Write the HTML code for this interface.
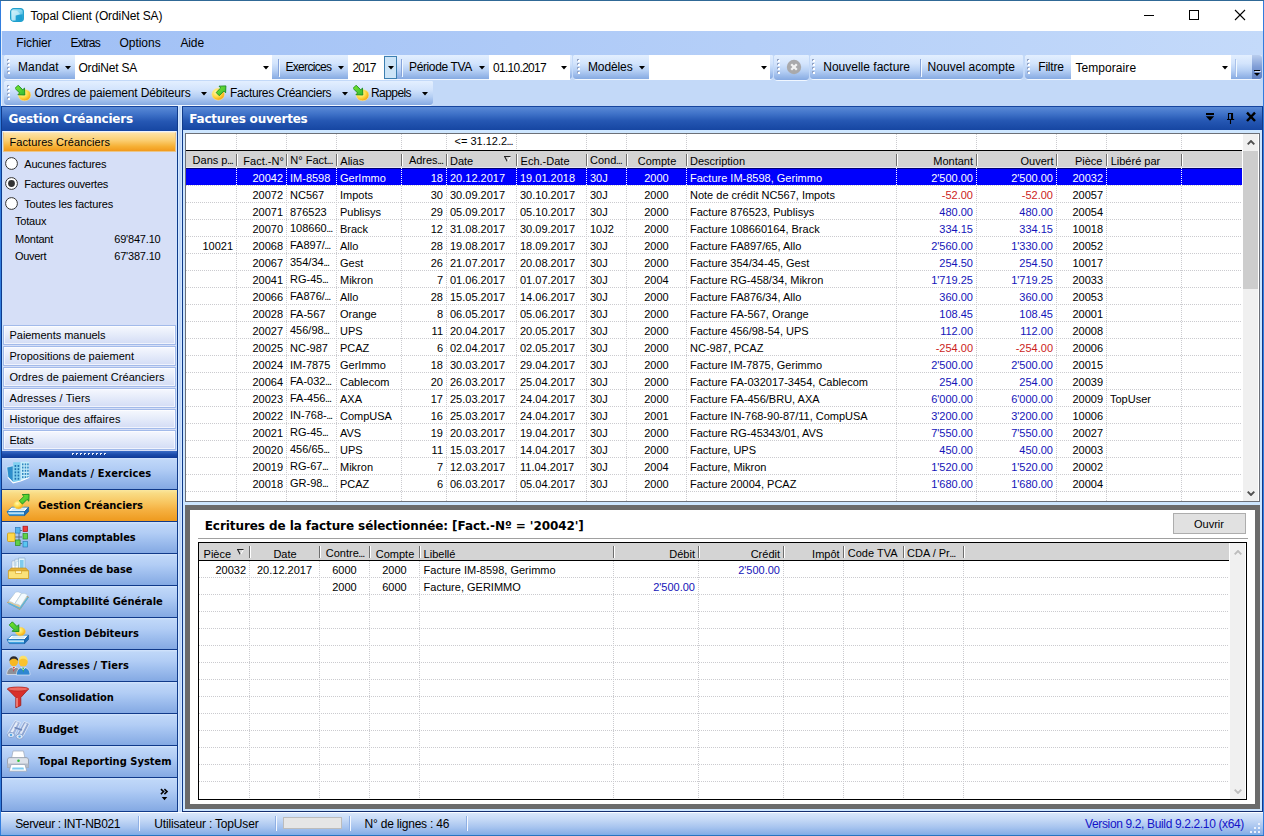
<!DOCTYPE html>
<html lang="fr"><head><meta charset="utf-8"><title>Topal Client (OrdiNet SA)</title>
<style>
html,body{margin:0;padding:0;}
body{width:1264px;height:836px;overflow:hidden;background:#327dde;font-family:"Liberation Sans",sans-serif;font-size:12px;}
#win{position:relative;width:1264px;height:836px;overflow:hidden;}
#win div,#win span,#win svg{position:absolute;box-sizing:border-box;}
.t{white-space:nowrap;}
.hd{font-family:"DejaVu Sans","Liberation Sans",sans-serif;}
.nv{font-family:"DejaVu Sans Condensed","DejaVu Sans","Liberation Sans",sans-serif;}
.e{font-style:normal;letter-spacing:-1.1px;margin-left:-0.5px;}

</style></head>
<body>
<div id="win">
<div style="left:0px;top:0px;width:1264px;height:1px;background:#306996;"></div>
<div style="left:0px;top:835px;width:1264px;height:1px;background:#2873be;"></div>
<div style="left:1px;top:1px;width:1262px;height:30px;background:#fff;"></div>
<svg style="left:10px;top:8px" width="14" height="14" viewBox="0 0 14 14"><defs><linearGradient id="ai" x1="0" y1="0" x2="1" y2="1"><stop offset="0" stop-color="#c9f0fa"/><stop offset="0.5" stop-color="#7fd3ee"/><stop offset="1" stop-color="#1d9fd2"/></linearGradient></defs><rect x="0.6" y="0.6" width="12.8" height="12.8" rx="3.2" fill="url(#ai)" stroke="#1f9fcc" stroke-width="1.1"/><path d="M5.6 7.4L12.6 6.2V10.4a2.4 2.4 0 0 1-2.4 2.4H5.6z" fill="#149bcf" opacity=".85"/><path d="M1.8 2.8h5.2l3.2 3.2-4.6 1.4v4.8H1.8z" fill="#e4f8fd" opacity=".55"/></svg>
<span class="t" style="top:7.5px;line-height:16px;font-size:12px;color:#000;letter-spacing:-0.109px;left:30.4px;">Topal Client (OrdiNet SA)</span>
<svg style="left:1130px;top:1px" width="133" height="30" viewBox="0 0 133 30" shape-rendering="crispEdges"><rect x="14" y="14" width="10" height="1" fill="#000"/><rect x="59.5" y="9.5" width="9" height="9" fill="none" stroke="#000" stroke-width="1"/><g shape-rendering="geometricPrecision" stroke="#000" stroke-width="1.1"><line x1="105" y1="9" x2="115" y2="19"/><line x1="115" y1="9" x2="105" y2="19"/></g></svg>
<div style="left:1px;top:31px;width:1262px;height:75px;background:#c3d9f8;"></div>
<div style="left:1px;top:31px;width:1262px;height:24px;background:linear-gradient(90deg,#9fbff5 0%,#c4dafa 100%);"></div>
<span class="t" style="top:34.5px;line-height:16px;font-size:12px;color:#000;letter-spacing:-0.129px;left:16.3px;">Fichier</span>
<span class="t" style="top:34.5px;line-height:16px;font-size:12px;color:#000;letter-spacing:-0.735px;left:70.4px;">Extras</span>
<span class="t" style="top:34.5px;line-height:16px;font-size:12px;color:#000;letter-spacing:-0.036px;left:119.5px;">Options</span>
<span class="t" style="top:34.5px;line-height:16px;font-size:12px;color:#000;letter-spacing:-0.104px;left:180.4px;">Aide</span>
<div style="left:1px;top:31px;width:1px;height:75px;background:#e4eefc;"></div>
<div style="left:4px;top:55px;width:568px;height:25px;background:#f1f7ff;border-radius:3px 2px 4px 4px;"></div>
<div style="left:4px;top:55px;width:568px;height:24px;background:linear-gradient(180deg,#e3efff 0%,#d3e4fc 35%,#b5cff4 65%,#86aae2 100%);border-radius:3px 2px 3px 3px;"></div>
<svg style="left:7px;top:59px" width="3" height="16" shape-rendering="crispEdges"><rect x="0" y="0" width="2" height="2" fill="#93a3c4"/><rect x="1" y="1" width="2" height="2" fill="#fff"/><rect x="0" y="4" width="2" height="2" fill="#93a3c4"/><rect x="1" y="5" width="2" height="2" fill="#fff"/><rect x="0" y="8" width="2" height="2" fill="#93a3c4"/><rect x="1" y="9" width="2" height="2" fill="#fff"/><rect x="0" y="12" width="2" height="2" fill="#93a3c4"/><rect x="1" y="13" width="2" height="2" fill="#fff"/></svg>
<span class="t" style="top:58.5px;line-height:16px;font-size:12px;color:#000;letter-spacing:0.121px;left:18px;">Mandat</span>
<svg style="left:64.5px;top:66.0px" width="6" height="4" viewBox="0 0 6 4"><path d="M0 0h6L3 3.4z" fill="#000"/></svg>
<div style="left:75px;top:55px;width:197px;height:25px;background:#fff;"></div>
<svg style="left:263px;top:66.0px" width="6" height="4" viewBox="0 0 6 4"><path d="M0 0h6L3 3.4z" fill="#000"/></svg>
<span class="t" style="top:59.5px;line-height:16px;font-size:12px;color:#000;letter-spacing:-0.219px;left:78.5px;">OrdiNet SA</span>
<div style="left:278px;top:59px;width:1px;height:17px;background:#86a3da;"></div>
<div style="left:279px;top:60px;width:1px;height:17px;background:#f1f9ff;"></div>
<span class="t" style="top:58.5px;line-height:16px;font-size:12px;color:#000;letter-spacing:-0.696px;left:285.5px;">Exercices</span>
<svg style="left:337.5px;top:66.0px" width="6" height="4" viewBox="0 0 6 4"><path d="M0 0h6L3 3.4z" fill="#000"/></svg>
<div style="left:348px;top:55px;width:36px;height:25px;background:#fff;"></div>
<span class="t" style="top:59.5px;line-height:16px;font-size:12px;color:#000;letter-spacing:-0.924px;left:352.5px;">2017</span>
<div style="left:384px;top:56px;width:13px;height:23px;background:#cce4f7;border:1px solid #3c7fb1;"></div>
<svg style="left:387.5px;top:66.0px" width="6" height="4" viewBox="0 0 6 4"><path d="M0 0h6L3 3.4z" fill="#000"/></svg>
<div style="left:401px;top:59px;width:1px;height:17px;background:#86a3da;"></div>
<div style="left:402px;top:60px;width:1px;height:17px;background:#f1f9ff;"></div>
<span class="t" style="top:58.5px;line-height:16px;font-size:12px;color:#000;letter-spacing:-0.377px;left:409px;">Période TVA</span>
<svg style="left:478.5px;top:66.0px" width="6" height="4" viewBox="0 0 6 4"><path d="M0 0h6L3 3.4z" fill="#000"/></svg>
<div style="left:489px;top:55px;width:81px;height:25px;background:#fff;"></div>
<svg style="left:561px;top:66.0px" width="6" height="4" viewBox="0 0 6 4"><path d="M0 0h6L3 3.4z" fill="#000"/></svg>
<span class="t" style="top:59.5px;line-height:16px;font-size:12px;color:#000;letter-spacing:-0.706px;left:493px;">01.10.2017</span>
<div style="left:573px;top:55px;width:200px;height:25px;background:#f1f7ff;border-radius:3px 2px 4px 4px;"></div>
<div style="left:573px;top:55px;width:200px;height:24px;background:linear-gradient(180deg,#e3efff 0%,#d3e4fc 35%,#b5cff4 65%,#86aae2 100%);border-radius:3px 2px 3px 3px;"></div>
<svg style="left:577px;top:59px" width="3" height="16" shape-rendering="crispEdges"><rect x="0" y="0" width="2" height="2" fill="#93a3c4"/><rect x="1" y="1" width="2" height="2" fill="#fff"/><rect x="0" y="4" width="2" height="2" fill="#93a3c4"/><rect x="1" y="5" width="2" height="2" fill="#fff"/><rect x="0" y="8" width="2" height="2" fill="#93a3c4"/><rect x="1" y="9" width="2" height="2" fill="#fff"/><rect x="0" y="12" width="2" height="2" fill="#93a3c4"/><rect x="1" y="13" width="2" height="2" fill="#fff"/></svg>
<span class="t" style="top:58.5px;line-height:16px;font-size:12px;color:#000;letter-spacing:-0.122px;left:588px;">Modèles</span>
<svg style="left:638.5px;top:66.0px" width="6" height="4" viewBox="0 0 6 4"><path d="M0 0h6L3 3.4z" fill="#000"/></svg>
<div style="left:649px;top:55px;width:121px;height:25px;background:#fff;"></div>
<svg style="left:761px;top:66.0px" width="6" height="4" viewBox="0 0 6 4"><path d="M0 0h6L3 3.4z" fill="#000"/></svg>
<div style="left:774px;top:55px;width:35px;height:26px;background:#f1f7ff;border-radius:3px 2px 4px 4px;"></div>
<div style="left:774px;top:55px;width:35px;height:25px;background:linear-gradient(180deg,#e3efff 0%,#d3e4fc 35%,#b5cff4 65%,#86aae2 100%);border-radius:3px 2px 3px 3px;"></div>
<svg style="left:777px;top:59px" width="3" height="16" shape-rendering="crispEdges"><rect x="0" y="0" width="2" height="2" fill="#93a3c4"/><rect x="1" y="1" width="2" height="2" fill="#fff"/><rect x="0" y="4" width="2" height="2" fill="#93a3c4"/><rect x="1" y="5" width="2" height="2" fill="#fff"/><rect x="0" y="8" width="2" height="2" fill="#93a3c4"/><rect x="1" y="9" width="2" height="2" fill="#fff"/><rect x="0" y="12" width="2" height="2" fill="#93a3c4"/><rect x="1" y="13" width="2" height="2" fill="#fff"/></svg>
<svg style="left:786px;top:59px" width="16" height="16" viewBox="0 0 16 16"><circle cx="8" cy="8" r="7.2" fill="#a9a9ab"/><path d="M5.2 5.2l5.6 5.6M10.8 5.2l-5.6 5.6" stroke="#f2f2f2" stroke-width="2.3" stroke-linecap="butt"/></svg>
<div style="left:810px;top:55px;width:213px;height:25px;background:#f1f7ff;border-radius:3px 2px 4px 4px;"></div>
<div style="left:810px;top:55px;width:213px;height:24px;background:linear-gradient(180deg,#e3efff 0%,#d3e4fc 35%,#b5cff4 65%,#86aae2 100%);border-radius:3px 2px 3px 3px;"></div>
<svg style="left:812px;top:59px" width="3" height="16" shape-rendering="crispEdges"><rect x="0" y="0" width="2" height="2" fill="#93a3c4"/><rect x="1" y="1" width="2" height="2" fill="#fff"/><rect x="0" y="4" width="2" height="2" fill="#93a3c4"/><rect x="1" y="5" width="2" height="2" fill="#fff"/><rect x="0" y="8" width="2" height="2" fill="#93a3c4"/><rect x="1" y="9" width="2" height="2" fill="#fff"/><rect x="0" y="12" width="2" height="2" fill="#93a3c4"/><rect x="1" y="13" width="2" height="2" fill="#fff"/></svg>
<span class="t" style="top:58.5px;line-height:16px;font-size:12px;color:#000;letter-spacing:0.002px;left:823.25px;">Nouvelle facture</span>
<div style="left:920px;top:59px;width:1px;height:17px;background:#86a3da;"></div>
<div style="left:921px;top:60px;width:1px;height:17px;background:#f1f9ff;"></div>
<span class="t" style="top:58.5px;line-height:16px;font-size:12px;color:#000;letter-spacing:0.056px;left:927.5px;">Nouvel acompte</span>
<div style="left:1025px;top:55px;width:237px;height:25px;background:#f1f7ff;border-radius:3px 2px 4px 4px;"></div>
<div style="left:1025px;top:55px;width:237px;height:24px;background:linear-gradient(180deg,#e3efff 0%,#d3e4fc 35%,#b5cff4 65%,#86aae2 100%);border-radius:3px 2px 3px 3px;"></div>
<svg style="left:1027px;top:59px" width="3" height="16" shape-rendering="crispEdges"><rect x="0" y="0" width="2" height="2" fill="#93a3c4"/><rect x="1" y="1" width="2" height="2" fill="#fff"/><rect x="0" y="4" width="2" height="2" fill="#93a3c4"/><rect x="1" y="5" width="2" height="2" fill="#fff"/><rect x="0" y="8" width="2" height="2" fill="#93a3c4"/><rect x="1" y="9" width="2" height="2" fill="#fff"/><rect x="0" y="12" width="2" height="2" fill="#93a3c4"/><rect x="1" y="13" width="2" height="2" fill="#fff"/></svg>
<span class="t" style="top:58.5px;line-height:16px;font-size:12px;color:#000;letter-spacing:-0.194px;left:1038.25px;">Filtre</span>
<div style="left:1071px;top:55px;width:160px;height:25px;background:#fff;"></div>
<svg style="left:1222px;top:66.0px" width="6" height="4" viewBox="0 0 6 4"><path d="M0 0h6L3 3.4z" fill="#000"/></svg>
<span class="t" style="top:59.5px;line-height:16px;font-size:12px;color:#000;letter-spacing:0.078px;left:1075.4px;">Temporaire</span>
<div style="left:1235px;top:59px;width:1px;height:17px;background:#a9c1ea;"></div>
<div style="left:1236px;top:60px;width:1px;height:17px;background:#f1f9ff;"></div>
<div style="left:1252px;top:55px;width:10px;height:24px;background:linear-gradient(180deg,#b9cdee 0%,#7f9dd6 50%,#5f7fc0 100%);border-radius:0 3px 3px 0;"></div>
<svg style="left:1252px;top:69px" width="10" height="9" viewBox="0 0 10 9" shape-rendering="crispEdges"><rect x="2" y="1" width="6" height="1" fill="#000"/><path d="M2 4h6L5 7z" fill="#000" shape-rendering="geometricPrecision"/><rect x="3" y="2" width="6" height="1" fill="#fff" opacity=".7"/></svg>
<div style="left:4px;top:81px;width:429px;height:25px;background:#f1f7ff;border-radius:3px 2px 4px 4px;"></div>
<div style="left:4px;top:81px;width:429px;height:24px;background:linear-gradient(180deg,#e3efff 0%,#d3e4fc 35%,#b5cff4 65%,#86aae2 100%);border-radius:3px 2px 3px 3px;"></div>
<svg style="left:7px;top:85px" width="3" height="16" shape-rendering="crispEdges"><rect x="0" y="0" width="2" height="2" fill="#93a3c4"/><rect x="1" y="1" width="2" height="2" fill="#fff"/><rect x="0" y="4" width="2" height="2" fill="#93a3c4"/><rect x="1" y="5" width="2" height="2" fill="#fff"/><rect x="0" y="8" width="2" height="2" fill="#93a3c4"/><rect x="1" y="9" width="2" height="2" fill="#fff"/><rect x="0" y="12" width="2" height="2" fill="#93a3c4"/><rect x="1" y="13" width="2" height="2" fill="#fff"/></svg>
<svg width="0" height="0" style="left:0;top:0"><defs><radialGradient id="cg" cx="0.36" cy="0.34" r="0.75"><stop offset="0" stop-color="#fff9b8"/><stop offset="0.5" stop-color="#ffdc45"/><stop offset="0.85" stop-color="#f5ac18"/><stop offset="1" stop-color="#e8960c"/></radialGradient><linearGradient id="gg" x1="0" y1="0" x2="1" y2="1"><stop offset="0" stop-color="#7dea28"/><stop offset="1" stop-color="#2fb83a"/></linearGradient></defs></svg>
<svg style="left:15px;top:85px" width="17" height="17" viewBox="0 0 17 17"><ellipse cx="9.6" cy="10.1" rx="6.3" ry="5.7" fill="url(#cg)" stroke="#f6e7a8" stroke-width=".6"/><path d="M9.8 10L9.5 3.1L7.76 4.84L3.16 0.24L0.04 3.36L4.64 7.96L2.9 9.7z" fill="url(#gg)" stroke="#178a1e" stroke-width=".9" stroke-linejoin="round"/></svg>
<span class="t" style="top:85.0px;line-height:16px;font-size:12px;color:#000;letter-spacing:-0.170px;left:34.5px;">Ordres de paiement Débiteurs</span>
<svg style="left:200.5px;top:91.5px" width="6" height="4" viewBox="0 0 6 4"><path d="M0 0h6L3 3.4z" fill="#000"/></svg>
<svg style="left:211px;top:85px" width="17" height="17" viewBox="0 0 17 17"><ellipse cx="7.2" cy="9.2" rx="6.3" ry="6" fill="url(#cg)" stroke="#f6e7a8" stroke-width=".6"/><path d="M14.9 0.9L8 1.2L9.74 2.94L5.14 7.54L8.26 10.66L12.86 6.06L14.6 7.8z" fill="url(#gg)" stroke="#178a1e" stroke-width=".9" stroke-linejoin="round"/></svg>
<span class="t" style="top:85.0px;line-height:16px;font-size:12px;color:#000;letter-spacing:-0.357px;left:230px;">Factures Créanciers</span>
<svg style="left:341.5px;top:91.5px" width="6" height="4" viewBox="0 0 6 4"><path d="M0 0h6L3 3.4z" fill="#000"/></svg>
<svg style="left:352.5px;top:85px" width="17" height="17" viewBox="0 0 17 17"><ellipse cx="9.6" cy="10.1" rx="6.3" ry="5.7" fill="url(#cg)" stroke="#f6e7a8" stroke-width=".6"/><path d="M9.8 10L9.5 3.1L7.76 4.84L3.16 0.24L0.04 3.36L4.64 7.96L2.9 9.7z" fill="url(#gg)" stroke="#178a1e" stroke-width=".9" stroke-linejoin="round"/></svg>
<span class="t" style="top:85.0px;line-height:16px;font-size:12px;color:#000;letter-spacing:-0.575px;left:371px;">Rappels</span>
<svg style="left:421.5px;top:91.5px" width="6" height="4" viewBox="0 0 6 4"><path d="M0 0h6L3 3.4z" fill="#000"/></svg>
<div style="left:1px;top:106px;width:1262px;height:706px;background:#c4d9f9;"></div>
<div style="left:1px;top:106px;width:177px;height:706px;background:#d6dff7;border-left:1px solid #103a8a;border-right:1px solid #103a8a;"></div>
<div style="left:1px;top:106px;width:177px;height:25px;background:linear-gradient(180deg,#5a8ad6 0%,#3f72c8 30%,#2557b3 60%,#1646a2 100%);border-left:1px solid #103a8a;border-right:1px solid #103a8a;border-top:1px solid #16459e;"></div>
<span class="t hd" style="top:110.5px;line-height:16px;font-size:12px;color:#fff;letter-spacing:-0.188px;font-weight:bold;left:8.5px;">Gestion Créanciers</span>
<div style="left:2px;top:131px;width:175px;height:1px;background:#eef3fd;"></div>
<div style="left:2px;top:131px;width:1px;height:680px;background:#c8e4ff;"></div>
<div style="left:176px;top:131px;width:1px;height:320px;background:#cfe3fd;"></div>
<div style="left:178px;top:106px;width:1px;height:706px;background:#d3e8ff;"></div>
<div style="left:181px;top:106px;width:1px;height:706px;background:#d3e8ff;"></div>
<div style="left:3px;top:132px;width:173px;height:20px;background:linear-gradient(180deg,#fde3a6 0%,#fbcf73 40%,#f6b034 75%,#f29a1c 100%);border:1px solid #e9c48a;border-top-color:#fbe9c4;"></div>
<span class="t" style="top:133.75px;line-height:16px;font-size:11px;color:#000;letter-spacing:0.077px;left:9.5px;">Factures Créanciers</span>
<svg style="left:5px;top:157.0px" width="13" height="13" viewBox="0 0 13 13"><circle cx="6.5" cy="6.5" r="5.9" fill="#fff" stroke="#333" stroke-width="1"/></svg>
<span class="t" style="top:155.5px;line-height:16px;font-size:11px;color:#000;letter-spacing:-0.187px;left:24.25px;">Aucunes factures</span>
<svg style="left:5px;top:177.0px" width="13" height="13" viewBox="0 0 13 13"><circle cx="6.5" cy="6.5" r="5.9" fill="#fff" stroke="#333" stroke-width="1"/><circle cx="6.5" cy="6.5" r="3.4" fill="#333"/></svg>
<span class="t" style="top:175.5px;line-height:16px;font-size:11px;color:#000;letter-spacing:-0.252px;left:24.25px;">Factures ouvertes</span>
<svg style="left:5px;top:197.0px" width="13" height="13" viewBox="0 0 13 13"><circle cx="6.5" cy="6.5" r="5.9" fill="#fff" stroke="#333" stroke-width="1"/></svg>
<span class="t" style="top:195.5px;line-height:16px;font-size:11px;color:#000;letter-spacing:-0.156px;left:24.25px;">Toutes les factures</span>
<span class="t" style="top:213.0px;line-height:16px;font-size:11px;color:#000;letter-spacing:-0.193px;left:15px;">Totaux</span>
<span class="t" style="top:230.75px;line-height:16px;font-size:11px;color:#000;letter-spacing:-0.249px;left:15px;">Montant</span>
<span class="t" style="top:230.75px;line-height:16px;font-size:11px;color:#000;letter-spacing:-0.192px;right:1103.5px;">69'847.10</span>
<span class="t" style="top:247.75px;line-height:16px;font-size:11px;color:#000;letter-spacing:-0.293px;left:15px;">Ouvert</span>
<span class="t" style="top:247.75px;line-height:16px;font-size:11px;color:#000;letter-spacing:-0.192px;right:1103.5px;">67'387.10</span>
<div style="left:3px;top:325px;width:173px;height:20px;background:linear-gradient(180deg,#f6f8fe 0%,#e6ecfa 45%,#d3dcf5 100%);border:1px solid #a2baea;box-shadow:inset 0 0 0 1px rgba(255,255,255,.65);"></div>
<span class="t" style="top:327.0px;line-height:16px;font-size:11px;color:#000;letter-spacing:-0.036px;left:9.5px;">Paiements manuels</span>
<div style="left:3px;top:346px;width:173px;height:20px;background:linear-gradient(180deg,#f6f8fe 0%,#e6ecfa 45%,#d3dcf5 100%);border:1px solid #a2baea;box-shadow:inset 0 0 0 1px rgba(255,255,255,.65);"></div>
<span class="t" style="top:348.0px;line-height:16px;font-size:11px;color:#000;letter-spacing:0.015px;left:9.5px;">Propositions de paiement</span>
<div style="left:3px;top:367px;width:173px;height:20px;background:linear-gradient(180deg,#f6f8fe 0%,#e6ecfa 45%,#d3dcf5 100%);border:1px solid #a2baea;box-shadow:inset 0 0 0 1px rgba(255,255,255,.65);"></div>
<span class="t" style="top:369.0px;line-height:16px;font-size:11px;color:#000;letter-spacing:0.053px;left:9.5px;">Ordres de paiement Créanciers</span>
<div style="left:3px;top:388px;width:173px;height:20px;background:linear-gradient(180deg,#f6f8fe 0%,#e6ecfa 45%,#d3dcf5 100%);border:1px solid #a2baea;box-shadow:inset 0 0 0 1px rgba(255,255,255,.65);"></div>
<span class="t" style="top:390.0px;line-height:16px;font-size:11px;color:#000;letter-spacing:0.121px;left:9.5px;">Adresses / Tiers</span>
<div style="left:3px;top:409px;width:173px;height:20px;background:linear-gradient(180deg,#f6f8fe 0%,#e6ecfa 45%,#d3dcf5 100%);border:1px solid #a2baea;box-shadow:inset 0 0 0 1px rgba(255,255,255,.65);"></div>
<span class="t" style="top:411.0px;line-height:16px;font-size:11px;color:#000;letter-spacing:0.076px;left:9.5px;">Historique des affaires</span>
<div style="left:3px;top:430px;width:173px;height:20px;background:linear-gradient(180deg,#f6f8fe 0%,#e6ecfa 45%,#d3dcf5 100%);border:1px solid #a2baea;box-shadow:inset 0 0 0 1px rgba(255,255,255,.65);"></div>
<span class="t" style="top:432.0px;line-height:16px;font-size:11px;color:#000;letter-spacing:-0.213px;left:9.5px;">Etats</span>
<div style="left:2px;top:451px;width:175px;height:7px;background:linear-gradient(180deg,#3a6cc6 0%,#1c4cab 50%,#0f3a97 100%);"></div>
<svg style="left:72px;top:453px" width="37" height="3" shape-rendering="crispEdges"><rect x="0" y="0" width="2" height="2" fill="#e8efff"/><rect x="1" y="1" width="1" height="1" fill="#0b2c7a"/><rect x="4" y="0" width="2" height="2" fill="#e8efff"/><rect x="5" y="1" width="1" height="1" fill="#0b2c7a"/><rect x="8" y="0" width="2" height="2" fill="#e8efff"/><rect x="9" y="1" width="1" height="1" fill="#0b2c7a"/><rect x="12" y="0" width="2" height="2" fill="#e8efff"/><rect x="13" y="1" width="1" height="1" fill="#0b2c7a"/><rect x="16" y="0" width="2" height="2" fill="#e8efff"/><rect x="17" y="1" width="1" height="1" fill="#0b2c7a"/><rect x="20" y="0" width="2" height="2" fill="#e8efff"/><rect x="21" y="1" width="1" height="1" fill="#0b2c7a"/><rect x="24" y="0" width="2" height="2" fill="#e8efff"/><rect x="25" y="1" width="1" height="1" fill="#0b2c7a"/><rect x="28" y="0" width="2" height="2" fill="#e8efff"/><rect x="29" y="1" width="1" height="1" fill="#0b2c7a"/><rect x="32" y="0" width="2" height="2" fill="#e8efff"/><rect x="33" y="1" width="1" height="1" fill="#0b2c7a"/></svg>
<div style="left:2px;top:458px;width:175px;height:31px;background:linear-gradient(180deg,#d3e4fc 0%,#bfd7f8 7%,#b2cdf5 35%,#a3c2f0 55%,#84a9e3 100%);"></div>
<div style="left:2px;top:489px;width:175px;height:1px;background:#103a8a;"></div>
<span class="t nv" style="top:465.5px;line-height:16px;font-size:11px;color:#000;letter-spacing:0.109px;font-weight:bold;left:38.3px;">Mandats / Exercices</span>
<div style="left:2px;top:490px;width:175px;height:31px;background:linear-gradient(180deg,#fae79f 0%,#f9dc85 10%,#f8c660 40%,#f5b040 65%,#ee9a1e 100%);"></div>
<div style="left:2px;top:521px;width:175px;height:1px;background:#103a8a;"></div>
<span class="t nv" style="top:497.5px;line-height:16px;font-size:11px;color:#000;letter-spacing:-0.053px;font-weight:bold;left:38.3px;">Gestion Créanciers</span>
<div style="left:2px;top:522px;width:175px;height:31px;background:linear-gradient(180deg,#d3e4fc 0%,#bfd7f8 7%,#b2cdf5 35%,#a3c2f0 55%,#84a9e3 100%);"></div>
<div style="left:2px;top:553px;width:175px;height:1px;background:#103a8a;"></div>
<span class="t nv" style="top:529.5px;line-height:16px;font-size:11px;color:#000;letter-spacing:-0.053px;font-weight:bold;left:38.3px;">Plans comptables</span>
<div style="left:2px;top:554px;width:175px;height:31px;background:linear-gradient(180deg,#d3e4fc 0%,#bfd7f8 7%,#b2cdf5 35%,#a3c2f0 55%,#84a9e3 100%);"></div>
<div style="left:2px;top:585px;width:175px;height:1px;background:#103a8a;"></div>
<span class="t nv" style="top:561.5px;line-height:16px;font-size:11px;color:#000;letter-spacing:-0.099px;font-weight:bold;left:38.3px;">Données de base</span>
<div style="left:2px;top:586px;width:175px;height:31px;background:linear-gradient(180deg,#d3e4fc 0%,#bfd7f8 7%,#b2cdf5 35%,#a3c2f0 55%,#84a9e3 100%);"></div>
<div style="left:2px;top:617px;width:175px;height:1px;background:#103a8a;"></div>
<span class="t nv" style="top:593.5px;line-height:16px;font-size:11px;color:#000;letter-spacing:-0.041px;font-weight:bold;left:38.3px;">Comptabilité Générale</span>
<div style="left:2px;top:618px;width:175px;height:31px;background:linear-gradient(180deg,#d3e4fc 0%,#bfd7f8 7%,#b2cdf5 35%,#a3c2f0 55%,#84a9e3 100%);"></div>
<div style="left:2px;top:649px;width:175px;height:1px;background:#103a8a;"></div>
<span class="t nv" style="top:625.5px;line-height:16px;font-size:11px;color:#000;letter-spacing:-0.018px;font-weight:bold;left:38.3px;">Gestion Débiteurs</span>
<div style="left:2px;top:650px;width:175px;height:31px;background:linear-gradient(180deg,#d3e4fc 0%,#bfd7f8 7%,#b2cdf5 35%,#a3c2f0 55%,#84a9e3 100%);"></div>
<div style="left:2px;top:681px;width:175px;height:1px;background:#103a8a;"></div>
<span class="t nv" style="top:657.5px;line-height:16px;font-size:11px;color:#000;letter-spacing:0.115px;font-weight:bold;left:38.3px;">Adresses / Tiers</span>
<div style="left:2px;top:682px;width:175px;height:31px;background:linear-gradient(180deg,#d3e4fc 0%,#bfd7f8 7%,#b2cdf5 35%,#a3c2f0 55%,#84a9e3 100%);"></div>
<div style="left:2px;top:713px;width:175px;height:1px;background:#103a8a;"></div>
<span class="t nv" style="top:689.5px;line-height:16px;font-size:11px;color:#000;letter-spacing:-0.062px;font-weight:bold;left:38.3px;">Consolidation</span>
<div style="left:2px;top:714px;width:175px;height:31px;background:linear-gradient(180deg,#d3e4fc 0%,#bfd7f8 7%,#b2cdf5 35%,#a3c2f0 55%,#84a9e3 100%);"></div>
<div style="left:2px;top:745px;width:175px;height:1px;background:#103a8a;"></div>
<span class="t nv" style="top:721.5px;line-height:16px;font-size:11px;color:#000;letter-spacing:0.016px;font-weight:bold;left:38.3px;">Budget</span>
<div style="left:2px;top:746px;width:175px;height:31px;background:linear-gradient(180deg,#d3e4fc 0%,#bfd7f8 7%,#b2cdf5 35%,#a3c2f0 55%,#84a9e3 100%);"></div>
<div style="left:2px;top:777px;width:175px;height:1px;background:#103a8a;"></div>
<span class="t nv" style="top:753.5px;line-height:16px;font-size:11px;color:#000;letter-spacing:0.031px;font-weight:bold;left:38.3px;">Topal Reporting System</span>
<div style="left:2px;top:778px;width:175px;height:33px;background:linear-gradient(180deg,#d3e4fc 0%,#bfd7f8 7%,#b2cdf5 35%,#a3c2f0 55%,#84a9e3 100%);"></div>
<div style="left:1px;top:811px;width:177px;height:1px;background:#103a8a;"></div>
<svg style="left:160px;top:788px" width="9" height="14" viewBox="0 0 9 14"><path d="M0.9 1.1l2.7 2.5l-2.7 2.5M4.4 1.1l2.7 2.5l-2.7 2.5" fill="none" stroke="#000" stroke-width="1.5"/><path d="M1.7 9h5.6L4.5 12.2z" fill="#000"/></svg>
<svg style="left:6px;top:461px" width="25" height="25" viewBox="0 0 25 25"><path d="M0.8 6.2L7.2 4.8V21.8L2 16.4z" fill="#2d8fcb" stroke="#e6f6ff" stroke-width=".6"/><path d="M7.2 1.2h7.4v18.8L7.2 21.8z" fill="#7fd0f0"/><path d="M14.6 0.8h8.6v15.8L14.6 20z" fill="#c4ecfa"/><rect x="8.6" y="4" width="1.6" height="1.9" fill="#1d6fae"/><rect x="8.6" y="7.2" width="1.6" height="1.9" fill="#1d6fae"/><rect x="8.6" y="10.4" width="1.6" height="1.9" fill="#1d6fae"/><rect x="8.6" y="13.6" width="1.6" height="1.9" fill="#1d6fae"/><rect x="8.6" y="16.8" width="1.6" height="1.9" fill="#1d6fae"/><rect x="11.6" y="4" width="1.6" height="1.9" fill="#1d6fae"/><rect x="11.6" y="7.2" width="1.6" height="1.9" fill="#1d6fae"/><rect x="11.6" y="10.4" width="1.6" height="1.9" fill="#1d6fae"/><rect x="11.6" y="13.6" width="1.6" height="1.9" fill="#1d6fae"/><rect x="11.6" y="16.8" width="1.6" height="1.9" fill="#1d6fae"/><rect x="16" y="2.4" width="1.5" height="1.9" fill="#2f86c0"/><rect x="16" y="5.6" width="1.5" height="1.9" fill="#2f86c0"/><rect x="16" y="8.8" width="1.5" height="1.9" fill="#2f86c0"/><rect x="16" y="12" width="1.5" height="1.9" fill="#2f86c0"/><rect x="16" y="15.2" width="1.5" height="1.9" fill="#2f86c0"/><rect x="18.7" y="2.4" width="1.5" height="1.9" fill="#2f86c0"/><rect x="18.7" y="5.6" width="1.5" height="1.9" fill="#2f86c0"/><rect x="18.7" y="8.8" width="1.5" height="1.9" fill="#2f86c0"/><rect x="18.7" y="12" width="1.5" height="1.9" fill="#2f86c0"/><rect x="18.7" y="15.2" width="1.5" height="1.9" fill="#2f86c0"/><rect x="21.2" y="2.4" width="1.5" height="1.9" fill="#2f86c0"/><rect x="21.2" y="5.6" width="1.5" height="1.9" fill="#2f86c0"/><rect x="21.2" y="8.8" width="1.5" height="1.9" fill="#2f86c0"/><rect x="21.2" y="12" width="1.5" height="1.9" fill="#2f86c0"/><rect x="21.2" y="15.2" width="1.5" height="1.9" fill="#2f86c0"/><path d="M2 16.4L7.2 21.8L14.6 20L23.2 16.6" fill="none" stroke="#fff" stroke-width="1.1"/></svg>
<svg style="left:6px;top:493px" width="25" height="25" viewBox="0 0 25 25"><path d="M1 18.6L5.8 14.2H22.6L18.6 18.6z" fill="#fff" stroke="#2a86c8" stroke-width=".8" stroke-linejoin="round"/><path d="M4.6 17.4L7.2 15.2H19.8L17.6 17.4z" fill="#cfe9f8"/><path d="M1 18.6H18.6V22.6H3.4z" fill="#3fa3e0" stroke="#1f70b8" stroke-width=".8" stroke-linejoin="round"/><path d="M2 19.6H18V20.8H2.6z" fill="#e6f5fd"/><path d="M18.6 18.6L22.6 14.2V18.4L18.6 22.6z" fill="#1f6fb8" stroke="#155a9c" stroke-width=".6" stroke-linejoin="round"/><ellipse cx="12.5" cy="11.8" rx="4.8" ry="4.08" fill="url(#cg)" stroke="#f3d36a" stroke-width=".5"/><g transform="translate(8.2,0.4)"><path d="M14.9 0.9L8 1.2L9.74 2.94L5.14 7.54L8.26 10.66L12.86 6.06L14.6 7.8z" fill="url(#gg)" stroke="#178a1e" stroke-width=".9" stroke-linejoin="round"/></g></svg>
<svg style="left:6px;top:525px" width="25" height="25" viewBox="0 0 25 25"><path d="M9 12h4M13 5.5v13M13 5.5h3M13 12h3M13 18.5h3" stroke="#5a6d8c" stroke-width="1" fill="none"/><rect x="1.5" y="8" width="7.5" height="8.5" rx="1" fill="#ffd84a" stroke="#c99a12" stroke-width=".8"/><rect x="9.5" y="2.5" width="4.6" height="5.6" fill="#59b5ec" stroke="#2b78b8" stroke-width=".7"/><rect x="17" y="1.2" width="4.6" height="5.4" fill="#ee3b3b" stroke="#a31616" stroke-width=".7"/><rect x="17" y="8.6" width="4.6" height="5.4" fill="#5fd04a" stroke="#2c8a1f" stroke-width=".7"/><rect x="9.5" y="15" width="4.6" height="5.6" fill="#5fd04a" stroke="#2c8a1f" stroke-width=".7"/><rect x="17" y="16.6" width="4.6" height="5.4" fill="#59c7f0" stroke="#2b78b8" stroke-width=".7"/></svg>
<svg style="left:6px;top:557px" width="25" height="25" viewBox="0 0 25 25"><path d="M6 4h7v10H6z" fill="#fff" stroke="#9bb4cf" stroke-width=".7"/><path d="M9 2.2h7v11H9z" fill="#f3fafe" stroke="#9bb4cf" stroke-width=".7"/><path d="M12.5 1h6.5v12h-6.5z" fill="#dff3fb" stroke="#8fb0cc" stroke-width=".7"/><path d="M14 3h3.6v8H14z" fill="#7fcbee"/><path d="M7.2 6h4M7.2 8h4M10.2 4.2h3" stroke="#9fc7de" stroke-width=".7"/><path d="M2.6 13.8L5.2 11h14.6l2.6 2.8z" fill="#e3b33a" stroke="#c08a10" stroke-width=".6"/><path d="M2.4 13.8h20.2v7.7H2.4z" fill="#fbe27a" stroke="#d39a14" stroke-width=".8" stroke-linejoin="round"/><path d="M9.5 13.8h6v2.7h-6z" fill="#fff6c8" stroke="#d39a14" stroke-width=".6"/></svg>
<svg style="left:6px;top:589px" width="25" height="25" viewBox="0 0 25 25"><path d="M1.5 13.5L10 4l12.5 4L14 20.5z" fill="#e9c98f" stroke="#b98f4c" stroke-width=".8" stroke-linejoin="round"/><path d="M2.5 12.5L9.5 3.2c2.4-.7 4.3-.2 6 1.4L8.6 15c-1.8-1.6-3.8-2.4-6.1-2.5z" fill="#fff" stroke="#a9c4d8" stroke-width=".6"/><path d="M15.5 4.6c2.3-.6 4.3-.1 6.1 1.4L14.6 17c-1.7-1.5-3.7-2.2-6-2z" fill="#f2fafe" stroke="#a9c4d8" stroke-width=".6"/><path d="M2.5 14.2L14 19.4l8-11" stroke="#58b4e0" stroke-width="1.5" fill="none"/></svg>
<svg style="left:6px;top:621px" width="25" height="25" viewBox="0 0 25 25"><path d="M1 18.6L5.8 14.2H22.6L18.6 18.6z" fill="#fff" stroke="#2a86c8" stroke-width=".8" stroke-linejoin="round"/><path d="M4.6 17.4L7.2 15.2H19.8L17.6 17.4z" fill="#cfe9f8"/><path d="M1 18.6H18.6V22.6H3.4z" fill="#3fa3e0" stroke="#1f70b8" stroke-width=".8" stroke-linejoin="round"/><path d="M2 19.6H18V20.8H2.6z" fill="#e6f5fd"/><path d="M18.6 18.6L22.6 14.2V18.4L18.6 22.6z" fill="#1f6fb8" stroke="#155a9c" stroke-width=".6" stroke-linejoin="round"/><ellipse cx="14.4" cy="10.6" rx="5" ry="4.25" fill="url(#cg)" stroke="#f3d36a" stroke-width=".5"/><g transform="translate(3.2,0.6)"><path d="M9.8 10L9.5 3.1L7.76 4.84L3.16 0.24L0.04 3.36L4.64 7.96L2.9 9.7z" fill="url(#gg)" stroke="#178a1e" stroke-width=".9" stroke-linejoin="round"/></g></svg>
<svg style="left:6px;top:653px" width="25" height="25" viewBox="0 0 25 25"><path d="M0.8 21.5c0-5 3-7.6 7-7.6s7 2.6 7 7.6z" fill="#8c9099" stroke="#f4f6fa" stroke-width=".6"/><path d="M6.8 14.2l1 4.8 1-4.8z" fill="#e02020"/><path d="M5.6 14l2.2 2 2.2-2" fill="none" stroke="#fff" stroke-width=".8"/><circle cx="7.8" cy="9" r="4.2" fill="#f7b722"/><path d="M3.3 8.3c0-3.2 2-5 4.5-5s4.5 1.8 4.5 5c-1.5-2-3-2.6-4.5-2.6S4.8 6.3 3.3 8.3z" fill="#2a2a30"/><path d="M10.4 22c0-5 2.8-7.6 6.8-7.6s6.8 2.6 6.8 7.6z" fill="#2f86d2" stroke="#f4f6fa" stroke-width=".6"/><path d="M16.2 14.8l1 4.6 1-4.6z" fill="#2fb83a"/><path d="M15 14.6l2.2 2 2.2-2" fill="none" stroke="#fff" stroke-width=".8"/><circle cx="17.2" cy="9" r="4.5" fill="#f9c22e"/><path d="M12.6 8c0-3.4 2.1-5.3 4.6-5.3s4.6 1.9 4.6 5.3c-1.5-1.7-3-2.3-4.6-2.3s-3.1.6-4.6 2.3z" fill="#fbe06a"/></svg>
<svg style="left:6px;top:685px" width="25" height="25" viewBox="0 0 25 25"><path d="M1.5 4c0-2 21-2 21 0L14.8 12.5V20.5l-5 2.3V12.5z" fill="#d92f2a" stroke="#9c1c16" stroke-width=".8" stroke-linejoin="round"/><ellipse cx="12" cy="4" rx="10.5" ry="2" fill="#ef6a62" stroke="#b3221c" stroke-width=".7"/><path d="M11 13v8.7" stroke="#f6a39b" stroke-width="1.3"/></svg>
<svg style="left:6px;top:717px" width="25" height="25" viewBox="0 0 25 25"><path d="M1.5 16.5L9 3.5l5.5 2L8 19z" fill="#9fb3db" stroke="#eef3fb" stroke-width=".7"/><path d="M4 16L10 5l2 .8L6 17z" fill="#e8eef9"/><path d="M10.5 18L18 4.5l5.5 2.2L16.5 20.5z" fill="#8ea5d2" stroke="#eef3fb" stroke-width=".7"/><path d="M13 17.5L19 6l2 .8L15 18.5z" fill="#dfe7f6"/><ellipse cx="5" cy="18" rx="3.6" ry="2.6" fill="#dbe6f6" stroke="#7f99c8" stroke-width=".8"/><ellipse cx="13.6" cy="19.6" rx="3.6" ry="2.6" fill="#dbe6f6" stroke="#7f99c8" stroke-width=".8"/><circle cx="5" cy="18" r="1.2" fill="#58a8e6"/><circle cx="13.6" cy="19.6" r="1.2" fill="#58a8e6"/><path d="M8.5 10.5l7.5 2.5" stroke="#6f88bb" stroke-width="1.6"/></svg>
<svg style="left:6px;top:749px" width="25" height="25" viewBox="0 0 25 25"><path d="M7 2h10.5l1.5 7.5H5.5z" fill="#fff" stroke="#a3afc0" stroke-width=".8"/><path d="M1.5 11c0-1.4 1-2.4 2.4-2.4h16.2c1.4 0 2.4 1 2.4 2.4V18.5H1.5z" fill="#dde2ea" stroke="#8d97a6" stroke-width=".8"/><path d="M1.5 14.5h21v4h-21z" fill="#b4bcc9"/><path d="M5 15.5h14l1.8 6.7H3.2z" fill="#fff" stroke="#9aa7b8" stroke-width=".8"/><path d="M6.5 18.5h11l.5 2h-12z" fill="#7fcbf0"/><circle cx="12.5" cy="11.8" r="1.3" fill="#2fc23a"/></svg>
<div style="left:182px;top:106px;width:1081px;height:706px;background:#cde6ff;border-left:1px solid #103a8a;border-right:1px solid #103a8a;"></div>
<div style="left:182px;top:106px;width:1081px;height:24px;background:linear-gradient(180deg,#5a8ad6 0%,#3f72c8 30%,#2557b3 60%,#1646a2 100%);border-left:1px solid #103a8a;border-right:1px solid #103a8a;border-top:1px solid #16459e;"></div>
<span class="t hd" style="top:110.5px;line-height:16px;font-size:12px;color:#fff;letter-spacing:-0.223px;font-weight:bold;left:189.25px;">Factures ouvertes</span>
<svg style="left:1204px;top:110px" width="54" height="16" viewBox="0 0 54 16"><rect x="2" y="3" width="8" height="2" fill="#000"/><path d="M1.8 6.2h8.4L6 10.8z" fill="#000"/><path d="M24.5 3.5h4v6h-4z" fill="none" stroke="#000" stroke-width="1.1"/><path d="M27.6 3.5v6M23 9.5h7.2M26.5 10v4" stroke="#000" stroke-width="1.1" fill="none"/><path d="M43 2.6l8 8.4M51 2.6l-8 8.4" stroke="#000" stroke-width="2.4"/></svg>
<div style="left:185px;top:133px;width:1075px;height:369px;background:#fff;border:1px solid #6c7078;"></div>
<div style="left:186px;top:150px;width:1056px;height:1px;background:#000;"></div>
<div style="left:186px;top:151px;width:1056px;height:17px;background:#d3d3d3;border-bottom:1px solid #e6e6f2;"></div>
<div style="left:186px;top:168px;width:1056px;height:17px;background:#0000fc;border-top:1px solid #000078;"></div>
<div style="left:186px;top:185px;width:1056px;height:1px;background:repeating-linear-gradient(90deg,#cbcbcf 0 1px,rgba(255,255,255,0) 1px 2px);"></div>
<div style="left:186px;top:202px;width:1056px;height:1px;background:repeating-linear-gradient(90deg,#cbcbcf 0 1px,rgba(255,255,255,0) 1px 2px);"></div>
<div style="left:186px;top:219px;width:1056px;height:1px;background:repeating-linear-gradient(90deg,#cbcbcf 0 1px,rgba(255,255,255,0) 1px 2px);"></div>
<div style="left:186px;top:236px;width:1056px;height:1px;background:repeating-linear-gradient(90deg,#cbcbcf 0 1px,rgba(255,255,255,0) 1px 2px);"></div>
<div style="left:186px;top:253px;width:1056px;height:1px;background:repeating-linear-gradient(90deg,#cbcbcf 0 1px,rgba(255,255,255,0) 1px 2px);"></div>
<div style="left:186px;top:270px;width:1056px;height:1px;background:repeating-linear-gradient(90deg,#cbcbcf 0 1px,rgba(255,255,255,0) 1px 2px);"></div>
<div style="left:186px;top:287px;width:1056px;height:1px;background:repeating-linear-gradient(90deg,#cbcbcf 0 1px,rgba(255,255,255,0) 1px 2px);"></div>
<div style="left:186px;top:304px;width:1056px;height:1px;background:repeating-linear-gradient(90deg,#cbcbcf 0 1px,rgba(255,255,255,0) 1px 2px);"></div>
<div style="left:186px;top:321px;width:1056px;height:1px;background:repeating-linear-gradient(90deg,#cbcbcf 0 1px,rgba(255,255,255,0) 1px 2px);"></div>
<div style="left:186px;top:338px;width:1056px;height:1px;background:repeating-linear-gradient(90deg,#cbcbcf 0 1px,rgba(255,255,255,0) 1px 2px);"></div>
<div style="left:186px;top:355px;width:1056px;height:1px;background:repeating-linear-gradient(90deg,#cbcbcf 0 1px,rgba(255,255,255,0) 1px 2px);"></div>
<div style="left:186px;top:372px;width:1056px;height:1px;background:repeating-linear-gradient(90deg,#cbcbcf 0 1px,rgba(255,255,255,0) 1px 2px);"></div>
<div style="left:186px;top:389px;width:1056px;height:1px;background:repeating-linear-gradient(90deg,#cbcbcf 0 1px,rgba(255,255,255,0) 1px 2px);"></div>
<div style="left:186px;top:406px;width:1056px;height:1px;background:repeating-linear-gradient(90deg,#cbcbcf 0 1px,rgba(255,255,255,0) 1px 2px);"></div>
<div style="left:186px;top:423px;width:1056px;height:1px;background:repeating-linear-gradient(90deg,#cbcbcf 0 1px,rgba(255,255,255,0) 1px 2px);"></div>
<div style="left:186px;top:440px;width:1056px;height:1px;background:repeating-linear-gradient(90deg,#cbcbcf 0 1px,rgba(255,255,255,0) 1px 2px);"></div>
<div style="left:186px;top:457px;width:1056px;height:1px;background:repeating-linear-gradient(90deg,#cbcbcf 0 1px,rgba(255,255,255,0) 1px 2px);"></div>
<div style="left:186px;top:474px;width:1056px;height:1px;background:repeating-linear-gradient(90deg,#cbcbcf 0 1px,rgba(255,255,255,0) 1px 2px);"></div>
<div style="left:186px;top:491px;width:1056px;height:1px;background:repeating-linear-gradient(90deg,#cbcbcf 0 1px,rgba(255,255,255,0) 1px 2px);"></div>
<div style="left:236px;top:134px;width:1px;height:16px;background:repeating-linear-gradient(180deg,#cbcbcf 0 1px,rgba(255,255,255,0) 1px 2px);"></div>
<div style="left:236px;top:186px;width:1px;height:315px;background:repeating-linear-gradient(180deg,#cbcbcf 0 1px,rgba(255,255,255,0) 1px 2px);"></div>
<div style="left:236px;top:168px;width:1px;height:17px;background:repeating-linear-gradient(180deg,#fff 0 1px,rgba(255,255,255,0) 1px 2px);"></div>
<div style="left:236px;top:154px;width:1px;height:12px;background:#6e6e6e;"></div>
<div style="left:237px;top:154px;width:1px;height:12px;background:#fff;"></div>
<div style="left:286px;top:134px;width:1px;height:16px;background:repeating-linear-gradient(180deg,#cbcbcf 0 1px,rgba(255,255,255,0) 1px 2px);"></div>
<div style="left:286px;top:186px;width:1px;height:315px;background:repeating-linear-gradient(180deg,#cbcbcf 0 1px,rgba(255,255,255,0) 1px 2px);"></div>
<div style="left:286px;top:168px;width:1px;height:17px;background:repeating-linear-gradient(180deg,#fff 0 1px,rgba(255,255,255,0) 1px 2px);"></div>
<div style="left:286px;top:154px;width:1px;height:12px;background:#6e6e6e;"></div>
<div style="left:287px;top:154px;width:1px;height:12px;background:#fff;"></div>
<div style="left:336px;top:134px;width:1px;height:16px;background:repeating-linear-gradient(180deg,#cbcbcf 0 1px,rgba(255,255,255,0) 1px 2px);"></div>
<div style="left:336px;top:186px;width:1px;height:315px;background:repeating-linear-gradient(180deg,#cbcbcf 0 1px,rgba(255,255,255,0) 1px 2px);"></div>
<div style="left:336px;top:168px;width:1px;height:17px;background:repeating-linear-gradient(180deg,#fff 0 1px,rgba(255,255,255,0) 1px 2px);"></div>
<div style="left:336px;top:154px;width:1px;height:12px;background:#6e6e6e;"></div>
<div style="left:337px;top:154px;width:1px;height:12px;background:#fff;"></div>
<div style="left:401px;top:134px;width:1px;height:16px;background:repeating-linear-gradient(180deg,#cbcbcf 0 1px,rgba(255,255,255,0) 1px 2px);"></div>
<div style="left:401px;top:186px;width:1px;height:315px;background:repeating-linear-gradient(180deg,#cbcbcf 0 1px,rgba(255,255,255,0) 1px 2px);"></div>
<div style="left:401px;top:168px;width:1px;height:17px;background:repeating-linear-gradient(180deg,#fff 0 1px,rgba(255,255,255,0) 1px 2px);"></div>
<div style="left:401px;top:154px;width:1px;height:12px;background:#6e6e6e;"></div>
<div style="left:402px;top:154px;width:1px;height:12px;background:#fff;"></div>
<div style="left:446px;top:134px;width:1px;height:16px;background:repeating-linear-gradient(180deg,#cbcbcf 0 1px,rgba(255,255,255,0) 1px 2px);"></div>
<div style="left:446px;top:186px;width:1px;height:315px;background:repeating-linear-gradient(180deg,#cbcbcf 0 1px,rgba(255,255,255,0) 1px 2px);"></div>
<div style="left:446px;top:168px;width:1px;height:17px;background:repeating-linear-gradient(180deg,#fff 0 1px,rgba(255,255,255,0) 1px 2px);"></div>
<div style="left:446px;top:154px;width:1px;height:12px;background:#6e6e6e;"></div>
<div style="left:447px;top:154px;width:1px;height:12px;background:#fff;"></div>
<div style="left:516px;top:134px;width:1px;height:16px;background:repeating-linear-gradient(180deg,#cbcbcf 0 1px,rgba(255,255,255,0) 1px 2px);"></div>
<div style="left:516px;top:186px;width:1px;height:315px;background:repeating-linear-gradient(180deg,#cbcbcf 0 1px,rgba(255,255,255,0) 1px 2px);"></div>
<div style="left:516px;top:168px;width:1px;height:17px;background:repeating-linear-gradient(180deg,#fff 0 1px,rgba(255,255,255,0) 1px 2px);"></div>
<div style="left:516px;top:154px;width:1px;height:12px;background:#6e6e6e;"></div>
<div style="left:517px;top:154px;width:1px;height:12px;background:#fff;"></div>
<div style="left:586px;top:134px;width:1px;height:16px;background:repeating-linear-gradient(180deg,#cbcbcf 0 1px,rgba(255,255,255,0) 1px 2px);"></div>
<div style="left:586px;top:186px;width:1px;height:315px;background:repeating-linear-gradient(180deg,#cbcbcf 0 1px,rgba(255,255,255,0) 1px 2px);"></div>
<div style="left:586px;top:168px;width:1px;height:17px;background:repeating-linear-gradient(180deg,#fff 0 1px,rgba(255,255,255,0) 1px 2px);"></div>
<div style="left:586px;top:154px;width:1px;height:12px;background:#6e6e6e;"></div>
<div style="left:587px;top:154px;width:1px;height:12px;background:#fff;"></div>
<div style="left:626px;top:134px;width:1px;height:16px;background:repeating-linear-gradient(180deg,#cbcbcf 0 1px,rgba(255,255,255,0) 1px 2px);"></div>
<div style="left:626px;top:186px;width:1px;height:315px;background:repeating-linear-gradient(180deg,#cbcbcf 0 1px,rgba(255,255,255,0) 1px 2px);"></div>
<div style="left:626px;top:168px;width:1px;height:17px;background:repeating-linear-gradient(180deg,#fff 0 1px,rgba(255,255,255,0) 1px 2px);"></div>
<div style="left:626px;top:154px;width:1px;height:12px;background:#6e6e6e;"></div>
<div style="left:627px;top:154px;width:1px;height:12px;background:#fff;"></div>
<div style="left:686px;top:134px;width:1px;height:16px;background:repeating-linear-gradient(180deg,#cbcbcf 0 1px,rgba(255,255,255,0) 1px 2px);"></div>
<div style="left:686px;top:186px;width:1px;height:315px;background:repeating-linear-gradient(180deg,#cbcbcf 0 1px,rgba(255,255,255,0) 1px 2px);"></div>
<div style="left:686px;top:168px;width:1px;height:17px;background:repeating-linear-gradient(180deg,#fff 0 1px,rgba(255,255,255,0) 1px 2px);"></div>
<div style="left:686px;top:154px;width:1px;height:12px;background:#6e6e6e;"></div>
<div style="left:687px;top:154px;width:1px;height:12px;background:#fff;"></div>
<div style="left:896px;top:134px;width:1px;height:16px;background:repeating-linear-gradient(180deg,#cbcbcf 0 1px,rgba(255,255,255,0) 1px 2px);"></div>
<div style="left:896px;top:186px;width:1px;height:315px;background:repeating-linear-gradient(180deg,#cbcbcf 0 1px,rgba(255,255,255,0) 1px 2px);"></div>
<div style="left:896px;top:168px;width:1px;height:17px;background:repeating-linear-gradient(180deg,#fff 0 1px,rgba(255,255,255,0) 1px 2px);"></div>
<div style="left:896px;top:154px;width:1px;height:12px;background:#6e6e6e;"></div>
<div style="left:897px;top:154px;width:1px;height:12px;background:#fff;"></div>
<div style="left:976px;top:134px;width:1px;height:16px;background:repeating-linear-gradient(180deg,#cbcbcf 0 1px,rgba(255,255,255,0) 1px 2px);"></div>
<div style="left:976px;top:186px;width:1px;height:315px;background:repeating-linear-gradient(180deg,#cbcbcf 0 1px,rgba(255,255,255,0) 1px 2px);"></div>
<div style="left:976px;top:168px;width:1px;height:17px;background:repeating-linear-gradient(180deg,#fff 0 1px,rgba(255,255,255,0) 1px 2px);"></div>
<div style="left:976px;top:154px;width:1px;height:12px;background:#6e6e6e;"></div>
<div style="left:977px;top:154px;width:1px;height:12px;background:#fff;"></div>
<div style="left:1056px;top:134px;width:1px;height:16px;background:repeating-linear-gradient(180deg,#cbcbcf 0 1px,rgba(255,255,255,0) 1px 2px);"></div>
<div style="left:1056px;top:186px;width:1px;height:315px;background:repeating-linear-gradient(180deg,#cbcbcf 0 1px,rgba(255,255,255,0) 1px 2px);"></div>
<div style="left:1056px;top:168px;width:1px;height:17px;background:repeating-linear-gradient(180deg,#fff 0 1px,rgba(255,255,255,0) 1px 2px);"></div>
<div style="left:1056px;top:154px;width:1px;height:12px;background:#6e6e6e;"></div>
<div style="left:1057px;top:154px;width:1px;height:12px;background:#fff;"></div>
<div style="left:1106px;top:134px;width:1px;height:16px;background:repeating-linear-gradient(180deg,#cbcbcf 0 1px,rgba(255,255,255,0) 1px 2px);"></div>
<div style="left:1106px;top:186px;width:1px;height:315px;background:repeating-linear-gradient(180deg,#cbcbcf 0 1px,rgba(255,255,255,0) 1px 2px);"></div>
<div style="left:1106px;top:168px;width:1px;height:17px;background:repeating-linear-gradient(180deg,#fff 0 1px,rgba(255,255,255,0) 1px 2px);"></div>
<div style="left:1106px;top:154px;width:1px;height:12px;background:#6e6e6e;"></div>
<div style="left:1107px;top:154px;width:1px;height:12px;background:#fff;"></div>
<div style="left:1181px;top:134px;width:1px;height:16px;background:repeating-linear-gradient(180deg,#cbcbcf 0 1px,rgba(255,255,255,0) 1px 2px);"></div>
<div style="left:1181px;top:186px;width:1px;height:315px;background:repeating-linear-gradient(180deg,#cbcbcf 0 1px,rgba(255,255,255,0) 1px 2px);"></div>
<div style="left:1181px;top:168px;width:1px;height:17px;background:repeating-linear-gradient(180deg,#fff 0 1px,rgba(255,255,255,0) 1px 2px);"></div>
<div style="left:1181px;top:154px;width:1px;height:12px;background:#6e6e6e;"></div>
<div style="left:1182px;top:154px;width:1px;height:12px;background:#fff;"></div>
<span class="t" style="top:133.0px;line-height:16px;font-size:11px;color:#000;left:454.5px;">&lt;= 31.12.2<i class="e">...</i></span>
<span class="t" style="top:152.0px;line-height:16px;font-size:11px;color:#000;left:192.6px;">Dans p<i class="e">...</i></span>
<span class="t" style="top:153.0px;line-height:16px;font-size:11px;color:#000;right:980.2px;">Fact.-N°</span>
<span class="t" style="top:152.0px;line-height:16px;font-size:11px;color:#000;left:290.3px;">N° Fact<i class="e">...</i></span>
<span class="t" style="top:153.0px;line-height:16px;font-size:11px;color:#000;left:340.3px;">Alias</span>
<span class="t" style="top:152.0px;line-height:16px;font-size:11px;color:#000;right:821px;">Adres<i class="e">...</i></span>
<span class="t" style="top:153.0px;line-height:16px;font-size:11px;color:#000;left:450px;">Date</span>
<span class="t" style="top:153.0px;line-height:16px;font-size:11px;color:#000;left:520.6px;">Ech.-Date</span>
<span class="t" style="top:152.0px;line-height:16px;font-size:11px;color:#000;left:590px;">Cond<i class="e">...</i></span>
<span class="t" style="top:153.0px;line-height:16px;font-size:11px;color:#000;left:457px;width:400px;text-align:center;">Compte</span>
<span class="t" style="top:153.0px;line-height:16px;font-size:11px;color:#000;left:690px;">Description</span>
<span class="t" style="top:153.0px;line-height:16px;font-size:11px;color:#000;right:291px;">Montant</span>
<span class="t" style="top:153.0px;line-height:16px;font-size:11px;color:#000;right:210.5px;">Ouvert</span>
<span class="t" style="top:153.0px;line-height:16px;font-size:11px;color:#000;right:161.5px;">Pièce</span>
<span class="t" style="top:153.0px;line-height:16px;font-size:11px;color:#000;left:1110.7px;">Libéré par</span>
<svg style="left:504px;top:156px" width="7" height="6" viewBox="0 0 7 6"><path d="M0 0.5h6.5M0.6 0.5L3.3 5.6" fill="none" stroke="#222" stroke-width="1.1"/><path d="M6.2 1L3.6 5.6" stroke="#fff" stroke-width="1"/></svg>
<span class="t" style="top:169.5px;line-height:16px;font-size:11px;color:#fff;right:981px;">20042</span>
<span class="t" style="top:169.5px;line-height:16px;font-size:11px;color:#fff;left:290px;">IM-8598</span>
<span class="t" style="top:169.5px;line-height:16px;font-size:11px;color:#fff;left:340px;">GerImmo</span>
<span class="t" style="top:169.5px;line-height:16px;font-size:11px;color:#fff;right:821px;">18</span>
<span class="t" style="top:169.5px;line-height:16px;font-size:11px;color:#fff;left:450px;">20.12.2017</span>
<span class="t" style="top:169.5px;line-height:16px;font-size:11px;color:#fff;left:520px;">19.01.2018</span>
<span class="t" style="top:169.5px;line-height:16px;font-size:11px;color:#fff;left:590px;">30J</span>
<span class="t" style="top:169.5px;line-height:16px;font-size:11px;color:#fff;left:456.5px;width:400px;text-align:center;">2000</span>
<span class="t" style="top:169.5px;line-height:16px;font-size:11px;color:#fff;left:690px;">Facture IM-8598, Gerimmo</span>
<span class="t" style="top:169.5px;line-height:16px;font-size:11px;color:#fff;right:291px;">2'500.00</span>
<span class="t" style="top:169.5px;line-height:16px;font-size:11px;color:#fff;right:211px;">2'500.00</span>
<span class="t" style="top:169.5px;line-height:16px;font-size:11px;color:#fff;right:161px;">20032</span>
<span class="t" style="top:186.5px;line-height:16px;font-size:11px;color:#000;right:981px;">20072</span>
<span class="t" style="top:186.5px;line-height:16px;font-size:11px;color:#000;left:290px;">NC567</span>
<span class="t" style="top:186.5px;line-height:16px;font-size:11px;color:#000;left:340px;">Impots</span>
<span class="t" style="top:186.5px;line-height:16px;font-size:11px;color:#000;right:821px;">30</span>
<span class="t" style="top:186.5px;line-height:16px;font-size:11px;color:#000;left:450px;">30.09.2017</span>
<span class="t" style="top:186.5px;line-height:16px;font-size:11px;color:#000;left:520px;">30.10.2017</span>
<span class="t" style="top:186.5px;line-height:16px;font-size:11px;color:#000;left:590px;">30J</span>
<span class="t" style="top:186.5px;line-height:16px;font-size:11px;color:#000;left:456.5px;width:400px;text-align:center;">2000</span>
<span class="t" style="top:186.5px;line-height:16px;font-size:11px;color:#000;left:690px;">Note de crédit NC567, Impots</span>
<span class="t" style="top:186.5px;line-height:16px;font-size:11px;color:#cc1c1c;right:291px;">-52.00</span>
<span class="t" style="top:186.5px;line-height:16px;font-size:11px;color:#cc1c1c;right:211px;">-52.00</span>
<span class="t" style="top:186.5px;line-height:16px;font-size:11px;color:#000;right:161px;">20057</span>
<span class="t" style="top:203.5px;line-height:16px;font-size:11px;color:#000;right:981px;">20071</span>
<span class="t" style="top:203.5px;line-height:16px;font-size:11px;color:#000;left:290px;">876523</span>
<span class="t" style="top:203.5px;line-height:16px;font-size:11px;color:#000;left:340px;">Publisys</span>
<span class="t" style="top:203.5px;line-height:16px;font-size:11px;color:#000;right:821px;">29</span>
<span class="t" style="top:203.5px;line-height:16px;font-size:11px;color:#000;left:450px;">05.09.2017</span>
<span class="t" style="top:203.5px;line-height:16px;font-size:11px;color:#000;left:520px;">05.10.2017</span>
<span class="t" style="top:203.5px;line-height:16px;font-size:11px;color:#000;left:590px;">30J</span>
<span class="t" style="top:203.5px;line-height:16px;font-size:11px;color:#000;left:456.5px;width:400px;text-align:center;">2000</span>
<span class="t" style="top:203.5px;line-height:16px;font-size:11px;color:#000;left:690px;">Facture 876523, Publisys</span>
<span class="t" style="top:203.5px;line-height:16px;font-size:11px;color:#1414b8;right:291px;">480.00</span>
<span class="t" style="top:203.5px;line-height:16px;font-size:11px;color:#1414b8;right:211px;">480.00</span>
<span class="t" style="top:203.5px;line-height:16px;font-size:11px;color:#000;right:161px;">20054</span>
<span class="t" style="top:220.5px;line-height:16px;font-size:11px;color:#000;right:981px;">20070</span>
<span class="t" style="top:219.5px;line-height:16px;font-size:11px;color:#000;left:290px;">108660<i class="e">...</i></span>
<span class="t" style="top:220.5px;line-height:16px;font-size:11px;color:#000;left:340px;">Brack</span>
<span class="t" style="top:220.5px;line-height:16px;font-size:11px;color:#000;right:821px;">12</span>
<span class="t" style="top:220.5px;line-height:16px;font-size:11px;color:#000;left:450px;">31.08.2017</span>
<span class="t" style="top:220.5px;line-height:16px;font-size:11px;color:#000;left:520px;">30.09.2017</span>
<span class="t" style="top:220.5px;line-height:16px;font-size:11px;color:#000;left:590px;">10J2</span>
<span class="t" style="top:220.5px;line-height:16px;font-size:11px;color:#000;left:456.5px;width:400px;text-align:center;">2000</span>
<span class="t" style="top:220.5px;line-height:16px;font-size:11px;color:#000;left:690px;">Facture 108660164, Brack</span>
<span class="t" style="top:220.5px;line-height:16px;font-size:11px;color:#1414b8;right:291px;">334.15</span>
<span class="t" style="top:220.5px;line-height:16px;font-size:11px;color:#1414b8;right:211px;">334.15</span>
<span class="t" style="top:220.5px;line-height:16px;font-size:11px;color:#000;right:161px;">10018</span>
<span class="t" style="top:237.5px;line-height:16px;font-size:11px;color:#000;right:1031px;">10021</span>
<span class="t" style="top:237.5px;line-height:16px;font-size:11px;color:#000;right:981px;">20068</span>
<span class="t" style="top:236.5px;line-height:16px;font-size:11px;color:#000;left:290px;">FA897/<i class="e">...</i></span>
<span class="t" style="top:237.5px;line-height:16px;font-size:11px;color:#000;left:340px;">Allo</span>
<span class="t" style="top:237.5px;line-height:16px;font-size:11px;color:#000;right:821px;">28</span>
<span class="t" style="top:237.5px;line-height:16px;font-size:11px;color:#000;left:450px;">19.08.2017</span>
<span class="t" style="top:237.5px;line-height:16px;font-size:11px;color:#000;left:520px;">18.09.2017</span>
<span class="t" style="top:237.5px;line-height:16px;font-size:11px;color:#000;left:590px;">30J</span>
<span class="t" style="top:237.5px;line-height:16px;font-size:11px;color:#000;left:456.5px;width:400px;text-align:center;">2000</span>
<span class="t" style="top:237.5px;line-height:16px;font-size:11px;color:#000;left:690px;">Facture FA897/65, Allo</span>
<span class="t" style="top:237.5px;line-height:16px;font-size:11px;color:#1414b8;right:291px;">2'560.00</span>
<span class="t" style="top:237.5px;line-height:16px;font-size:11px;color:#1414b8;right:211px;">1'330.00</span>
<span class="t" style="top:237.5px;line-height:16px;font-size:11px;color:#000;right:161px;">20052</span>
<span class="t" style="top:254.5px;line-height:16px;font-size:11px;color:#000;right:981px;">20067</span>
<span class="t" style="top:253.5px;line-height:16px;font-size:11px;color:#000;left:290px;">354/34<i class="e">...</i></span>
<span class="t" style="top:254.5px;line-height:16px;font-size:11px;color:#000;left:340px;">Gest</span>
<span class="t" style="top:254.5px;line-height:16px;font-size:11px;color:#000;right:821px;">26</span>
<span class="t" style="top:254.5px;line-height:16px;font-size:11px;color:#000;left:450px;">21.07.2017</span>
<span class="t" style="top:254.5px;line-height:16px;font-size:11px;color:#000;left:520px;">20.08.2017</span>
<span class="t" style="top:254.5px;line-height:16px;font-size:11px;color:#000;left:590px;">30J</span>
<span class="t" style="top:254.5px;line-height:16px;font-size:11px;color:#000;left:456.5px;width:400px;text-align:center;">2000</span>
<span class="t" style="top:254.5px;line-height:16px;font-size:11px;color:#000;left:690px;">Facture 354/34-45, Gest</span>
<span class="t" style="top:254.5px;line-height:16px;font-size:11px;color:#1414b8;right:291px;">254.50</span>
<span class="t" style="top:254.5px;line-height:16px;font-size:11px;color:#1414b8;right:211px;">254.50</span>
<span class="t" style="top:254.5px;line-height:16px;font-size:11px;color:#000;right:161px;">10017</span>
<span class="t" style="top:271.5px;line-height:16px;font-size:11px;color:#000;right:981px;">20041</span>
<span class="t" style="top:270.5px;line-height:16px;font-size:11px;color:#000;left:290px;">RG-45<i class="e">...</i></span>
<span class="t" style="top:271.5px;line-height:16px;font-size:11px;color:#000;left:340px;">Mikron</span>
<span class="t" style="top:271.5px;line-height:16px;font-size:11px;color:#000;right:821px;">7</span>
<span class="t" style="top:271.5px;line-height:16px;font-size:11px;color:#000;left:450px;">01.06.2017</span>
<span class="t" style="top:271.5px;line-height:16px;font-size:11px;color:#000;left:520px;">01.07.2017</span>
<span class="t" style="top:271.5px;line-height:16px;font-size:11px;color:#000;left:590px;">30J</span>
<span class="t" style="top:271.5px;line-height:16px;font-size:11px;color:#000;left:456.5px;width:400px;text-align:center;">2004</span>
<span class="t" style="top:271.5px;line-height:16px;font-size:11px;color:#000;left:690px;">Facture RG-458/34, Mikron</span>
<span class="t" style="top:271.5px;line-height:16px;font-size:11px;color:#1414b8;right:291px;">1'719.25</span>
<span class="t" style="top:271.5px;line-height:16px;font-size:11px;color:#1414b8;right:211px;">1'719.25</span>
<span class="t" style="top:271.5px;line-height:16px;font-size:11px;color:#000;right:161px;">20033</span>
<span class="t" style="top:288.5px;line-height:16px;font-size:11px;color:#000;right:981px;">20066</span>
<span class="t" style="top:287.5px;line-height:16px;font-size:11px;color:#000;left:290px;">FA876/<i class="e">...</i></span>
<span class="t" style="top:288.5px;line-height:16px;font-size:11px;color:#000;left:340px;">Allo</span>
<span class="t" style="top:288.5px;line-height:16px;font-size:11px;color:#000;right:821px;">28</span>
<span class="t" style="top:288.5px;line-height:16px;font-size:11px;color:#000;left:450px;">15.05.2017</span>
<span class="t" style="top:288.5px;line-height:16px;font-size:11px;color:#000;left:520px;">14.06.2017</span>
<span class="t" style="top:288.5px;line-height:16px;font-size:11px;color:#000;left:590px;">30J</span>
<span class="t" style="top:288.5px;line-height:16px;font-size:11px;color:#000;left:456.5px;width:400px;text-align:center;">2000</span>
<span class="t" style="top:288.5px;line-height:16px;font-size:11px;color:#000;left:690px;">Facture FA876/34, Allo</span>
<span class="t" style="top:288.5px;line-height:16px;font-size:11px;color:#1414b8;right:291px;">360.00</span>
<span class="t" style="top:288.5px;line-height:16px;font-size:11px;color:#1414b8;right:211px;">360.00</span>
<span class="t" style="top:288.5px;line-height:16px;font-size:11px;color:#000;right:161px;">20053</span>
<span class="t" style="top:305.5px;line-height:16px;font-size:11px;color:#000;right:981px;">20028</span>
<span class="t" style="top:305.5px;line-height:16px;font-size:11px;color:#000;left:290px;">FA-567</span>
<span class="t" style="top:305.5px;line-height:16px;font-size:11px;color:#000;left:340px;">Orange</span>
<span class="t" style="top:305.5px;line-height:16px;font-size:11px;color:#000;right:821px;">8</span>
<span class="t" style="top:305.5px;line-height:16px;font-size:11px;color:#000;left:450px;">06.05.2017</span>
<span class="t" style="top:305.5px;line-height:16px;font-size:11px;color:#000;left:520px;">05.06.2017</span>
<span class="t" style="top:305.5px;line-height:16px;font-size:11px;color:#000;left:590px;">30J</span>
<span class="t" style="top:305.5px;line-height:16px;font-size:11px;color:#000;left:456.5px;width:400px;text-align:center;">2000</span>
<span class="t" style="top:305.5px;line-height:16px;font-size:11px;color:#000;left:690px;">Facture FA-567, Orange</span>
<span class="t" style="top:305.5px;line-height:16px;font-size:11px;color:#1414b8;right:291px;">108.45</span>
<span class="t" style="top:305.5px;line-height:16px;font-size:11px;color:#1414b8;right:211px;">108.45</span>
<span class="t" style="top:305.5px;line-height:16px;font-size:11px;color:#000;right:161px;">20001</span>
<span class="t" style="top:322.5px;line-height:16px;font-size:11px;color:#000;right:981px;">20027</span>
<span class="t" style="top:321.5px;line-height:16px;font-size:11px;color:#000;left:290px;">456/98<i class="e">...</i></span>
<span class="t" style="top:322.5px;line-height:16px;font-size:11px;color:#000;left:340px;">UPS</span>
<span class="t" style="top:322.5px;line-height:16px;font-size:11px;color:#000;right:821px;">11</span>
<span class="t" style="top:322.5px;line-height:16px;font-size:11px;color:#000;left:450px;">20.04.2017</span>
<span class="t" style="top:322.5px;line-height:16px;font-size:11px;color:#000;left:520px;">20.05.2017</span>
<span class="t" style="top:322.5px;line-height:16px;font-size:11px;color:#000;left:590px;">30J</span>
<span class="t" style="top:322.5px;line-height:16px;font-size:11px;color:#000;left:456.5px;width:400px;text-align:center;">2000</span>
<span class="t" style="top:322.5px;line-height:16px;font-size:11px;color:#000;left:690px;">Facture 456/98-54, UPS</span>
<span class="t" style="top:322.5px;line-height:16px;font-size:11px;color:#1414b8;right:291px;">112.00</span>
<span class="t" style="top:322.5px;line-height:16px;font-size:11px;color:#1414b8;right:211px;">112.00</span>
<span class="t" style="top:322.5px;line-height:16px;font-size:11px;color:#000;right:161px;">20008</span>
<span class="t" style="top:339.5px;line-height:16px;font-size:11px;color:#000;right:981px;">20025</span>
<span class="t" style="top:339.5px;line-height:16px;font-size:11px;color:#000;left:290px;">NC-987</span>
<span class="t" style="top:339.5px;line-height:16px;font-size:11px;color:#000;left:340px;">PCAZ</span>
<span class="t" style="top:339.5px;line-height:16px;font-size:11px;color:#000;right:821px;">6</span>
<span class="t" style="top:339.5px;line-height:16px;font-size:11px;color:#000;left:450px;">02.04.2017</span>
<span class="t" style="top:339.5px;line-height:16px;font-size:11px;color:#000;left:520px;">02.05.2017</span>
<span class="t" style="top:339.5px;line-height:16px;font-size:11px;color:#000;left:590px;">30J</span>
<span class="t" style="top:339.5px;line-height:16px;font-size:11px;color:#000;left:456.5px;width:400px;text-align:center;">2000</span>
<span class="t" style="top:339.5px;line-height:16px;font-size:11px;color:#000;left:690px;">NC-987, PCAZ</span>
<span class="t" style="top:339.5px;line-height:16px;font-size:11px;color:#cc1c1c;right:291px;">-254.00</span>
<span class="t" style="top:339.5px;line-height:16px;font-size:11px;color:#cc1c1c;right:211px;">-254.00</span>
<span class="t" style="top:339.5px;line-height:16px;font-size:11px;color:#000;right:161px;">20006</span>
<span class="t" style="top:356.5px;line-height:16px;font-size:11px;color:#000;right:981px;">20024</span>
<span class="t" style="top:356.5px;line-height:16px;font-size:11px;color:#000;left:290px;">IM-7875</span>
<span class="t" style="top:356.5px;line-height:16px;font-size:11px;color:#000;left:340px;">GerImmo</span>
<span class="t" style="top:356.5px;line-height:16px;font-size:11px;color:#000;right:821px;">18</span>
<span class="t" style="top:356.5px;line-height:16px;font-size:11px;color:#000;left:450px;">30.03.2017</span>
<span class="t" style="top:356.5px;line-height:16px;font-size:11px;color:#000;left:520px;">29.04.2017</span>
<span class="t" style="top:356.5px;line-height:16px;font-size:11px;color:#000;left:590px;">30J</span>
<span class="t" style="top:356.5px;line-height:16px;font-size:11px;color:#000;left:456.5px;width:400px;text-align:center;">2000</span>
<span class="t" style="top:356.5px;line-height:16px;font-size:11px;color:#000;left:690px;">Facture IM-7875, Gerimmo</span>
<span class="t" style="top:356.5px;line-height:16px;font-size:11px;color:#1414b8;right:291px;">2'500.00</span>
<span class="t" style="top:356.5px;line-height:16px;font-size:11px;color:#1414b8;right:211px;">2'500.00</span>
<span class="t" style="top:356.5px;line-height:16px;font-size:11px;color:#000;right:161px;">20015</span>
<span class="t" style="top:373.5px;line-height:16px;font-size:11px;color:#000;right:981px;">20064</span>
<span class="t" style="top:372.5px;line-height:16px;font-size:11px;color:#000;left:290px;">FA-032<i class="e">...</i></span>
<span class="t" style="top:373.5px;line-height:16px;font-size:11px;color:#000;left:340px;">Cablecom</span>
<span class="t" style="top:373.5px;line-height:16px;font-size:11px;color:#000;right:821px;">20</span>
<span class="t" style="top:373.5px;line-height:16px;font-size:11px;color:#000;left:450px;">26.03.2017</span>
<span class="t" style="top:373.5px;line-height:16px;font-size:11px;color:#000;left:520px;">25.04.2017</span>
<span class="t" style="top:373.5px;line-height:16px;font-size:11px;color:#000;left:590px;">30J</span>
<span class="t" style="top:373.5px;line-height:16px;font-size:11px;color:#000;left:456.5px;width:400px;text-align:center;">2000</span>
<span class="t" style="top:373.5px;line-height:16px;font-size:11px;color:#000;left:690px;">Facture FA-032017-3454, Cablecom</span>
<span class="t" style="top:373.5px;line-height:16px;font-size:11px;color:#1414b8;right:291px;">254.00</span>
<span class="t" style="top:373.5px;line-height:16px;font-size:11px;color:#1414b8;right:211px;">254.00</span>
<span class="t" style="top:373.5px;line-height:16px;font-size:11px;color:#000;right:161px;">20039</span>
<span class="t" style="top:390.5px;line-height:16px;font-size:11px;color:#000;right:981px;">20023</span>
<span class="t" style="top:389.5px;line-height:16px;font-size:11px;color:#000;left:290px;">FA-456<i class="e">...</i></span>
<span class="t" style="top:390.5px;line-height:16px;font-size:11px;color:#000;left:340px;">AXA</span>
<span class="t" style="top:390.5px;line-height:16px;font-size:11px;color:#000;right:821px;">17</span>
<span class="t" style="top:390.5px;line-height:16px;font-size:11px;color:#000;left:450px;">25.03.2017</span>
<span class="t" style="top:390.5px;line-height:16px;font-size:11px;color:#000;left:520px;">24.04.2017</span>
<span class="t" style="top:390.5px;line-height:16px;font-size:11px;color:#000;left:590px;">30J</span>
<span class="t" style="top:390.5px;line-height:16px;font-size:11px;color:#000;left:456.5px;width:400px;text-align:center;">2000</span>
<span class="t" style="top:390.5px;line-height:16px;font-size:11px;color:#000;left:690px;">Facture FA-456/BRU, AXA</span>
<span class="t" style="top:390.5px;line-height:16px;font-size:11px;color:#1414b8;right:291px;">6'000.00</span>
<span class="t" style="top:390.5px;line-height:16px;font-size:11px;color:#1414b8;right:211px;">6'000.00</span>
<span class="t" style="top:390.5px;line-height:16px;font-size:11px;color:#000;right:161px;">20009</span>
<span class="t" style="top:390.5px;line-height:16px;font-size:11px;color:#000;left:1110px;">TopUser</span>
<span class="t" style="top:407.5px;line-height:16px;font-size:11px;color:#000;right:981px;">20022</span>
<span class="t" style="top:406.5px;line-height:16px;font-size:11px;color:#000;left:290px;">IN-768-<i class="e">...</i></span>
<span class="t" style="top:407.5px;line-height:16px;font-size:11px;color:#000;left:340px;">CompUSA</span>
<span class="t" style="top:407.5px;line-height:16px;font-size:11px;color:#000;right:821px;">16</span>
<span class="t" style="top:407.5px;line-height:16px;font-size:11px;color:#000;left:450px;">25.03.2017</span>
<span class="t" style="top:407.5px;line-height:16px;font-size:11px;color:#000;left:520px;">24.04.2017</span>
<span class="t" style="top:407.5px;line-height:16px;font-size:11px;color:#000;left:590px;">30J</span>
<span class="t" style="top:407.5px;line-height:16px;font-size:11px;color:#000;left:456.5px;width:400px;text-align:center;">2001</span>
<span class="t" style="top:407.5px;line-height:16px;font-size:11px;color:#000;left:690px;">Facture IN-768-90-87/11, CompUSA</span>
<span class="t" style="top:407.5px;line-height:16px;font-size:11px;color:#1414b8;right:291px;">3'200.00</span>
<span class="t" style="top:407.5px;line-height:16px;font-size:11px;color:#1414b8;right:211px;">3'200.00</span>
<span class="t" style="top:407.5px;line-height:16px;font-size:11px;color:#000;right:161px;">10006</span>
<span class="t" style="top:424.5px;line-height:16px;font-size:11px;color:#000;right:981px;">20021</span>
<span class="t" style="top:423.5px;line-height:16px;font-size:11px;color:#000;left:290px;">RG-45<i class="e">...</i></span>
<span class="t" style="top:424.5px;line-height:16px;font-size:11px;color:#000;left:340px;">AVS</span>
<span class="t" style="top:424.5px;line-height:16px;font-size:11px;color:#000;right:821px;">19</span>
<span class="t" style="top:424.5px;line-height:16px;font-size:11px;color:#000;left:450px;">20.03.2017</span>
<span class="t" style="top:424.5px;line-height:16px;font-size:11px;color:#000;left:520px;">19.04.2017</span>
<span class="t" style="top:424.5px;line-height:16px;font-size:11px;color:#000;left:590px;">30J</span>
<span class="t" style="top:424.5px;line-height:16px;font-size:11px;color:#000;left:456.5px;width:400px;text-align:center;">2000</span>
<span class="t" style="top:424.5px;line-height:16px;font-size:11px;color:#000;left:690px;">Facture RG-45343/01, AVS</span>
<span class="t" style="top:424.5px;line-height:16px;font-size:11px;color:#1414b8;right:291px;">7'550.00</span>
<span class="t" style="top:424.5px;line-height:16px;font-size:11px;color:#1414b8;right:211px;">7'550.00</span>
<span class="t" style="top:424.5px;line-height:16px;font-size:11px;color:#000;right:161px;">20027</span>
<span class="t" style="top:441.5px;line-height:16px;font-size:11px;color:#000;right:981px;">20020</span>
<span class="t" style="top:440.5px;line-height:16px;font-size:11px;color:#000;left:290px;">456/65<i class="e">...</i></span>
<span class="t" style="top:441.5px;line-height:16px;font-size:11px;color:#000;left:340px;">UPS</span>
<span class="t" style="top:441.5px;line-height:16px;font-size:11px;color:#000;right:821px;">11</span>
<span class="t" style="top:441.5px;line-height:16px;font-size:11px;color:#000;left:450px;">15.03.2017</span>
<span class="t" style="top:441.5px;line-height:16px;font-size:11px;color:#000;left:520px;">14.04.2017</span>
<span class="t" style="top:441.5px;line-height:16px;font-size:11px;color:#000;left:590px;">30J</span>
<span class="t" style="top:441.5px;line-height:16px;font-size:11px;color:#000;left:456.5px;width:400px;text-align:center;">2000</span>
<span class="t" style="top:441.5px;line-height:16px;font-size:11px;color:#000;left:690px;">Facture, UPS</span>
<span class="t" style="top:441.5px;line-height:16px;font-size:11px;color:#1414b8;right:291px;">450.00</span>
<span class="t" style="top:441.5px;line-height:16px;font-size:11px;color:#1414b8;right:211px;">450.00</span>
<span class="t" style="top:441.5px;line-height:16px;font-size:11px;color:#000;right:161px;">20003</span>
<span class="t" style="top:458.5px;line-height:16px;font-size:11px;color:#000;right:981px;">20019</span>
<span class="t" style="top:457.5px;line-height:16px;font-size:11px;color:#000;left:290px;">RG-67<i class="e">...</i></span>
<span class="t" style="top:458.5px;line-height:16px;font-size:11px;color:#000;left:340px;">Mikron</span>
<span class="t" style="top:458.5px;line-height:16px;font-size:11px;color:#000;right:821px;">7</span>
<span class="t" style="top:458.5px;line-height:16px;font-size:11px;color:#000;left:450px;">12.03.2017</span>
<span class="t" style="top:458.5px;line-height:16px;font-size:11px;color:#000;left:520px;">11.04.2017</span>
<span class="t" style="top:458.5px;line-height:16px;font-size:11px;color:#000;left:590px;">30J</span>
<span class="t" style="top:458.5px;line-height:16px;font-size:11px;color:#000;left:456.5px;width:400px;text-align:center;">2004</span>
<span class="t" style="top:458.5px;line-height:16px;font-size:11px;color:#000;left:690px;">Facture, Mikron</span>
<span class="t" style="top:458.5px;line-height:16px;font-size:11px;color:#1414b8;right:291px;">1'520.00</span>
<span class="t" style="top:458.5px;line-height:16px;font-size:11px;color:#1414b8;right:211px;">1'520.00</span>
<span class="t" style="top:458.5px;line-height:16px;font-size:11px;color:#000;right:161px;">20002</span>
<span class="t" style="top:475.5px;line-height:16px;font-size:11px;color:#000;right:981px;">20018</span>
<span class="t" style="top:474.5px;line-height:16px;font-size:11px;color:#000;left:290px;">GR-98<i class="e">...</i></span>
<span class="t" style="top:475.5px;line-height:16px;font-size:11px;color:#000;left:340px;">PCAZ</span>
<span class="t" style="top:475.5px;line-height:16px;font-size:11px;color:#000;right:821px;">6</span>
<span class="t" style="top:475.5px;line-height:16px;font-size:11px;color:#000;left:450px;">06.03.2017</span>
<span class="t" style="top:475.5px;line-height:16px;font-size:11px;color:#000;left:520px;">05.04.2017</span>
<span class="t" style="top:475.5px;line-height:16px;font-size:11px;color:#000;left:590px;">30J</span>
<span class="t" style="top:475.5px;line-height:16px;font-size:11px;color:#000;left:456.5px;width:400px;text-align:center;">2000</span>
<span class="t" style="top:475.5px;line-height:16px;font-size:11px;color:#000;left:690px;">Facture 20004, PCAZ</span>
<span class="t" style="top:475.5px;line-height:16px;font-size:11px;color:#1414b8;right:291px;">1'680.00</span>
<span class="t" style="top:475.5px;line-height:16px;font-size:11px;color:#1414b8;right:211px;">1'680.00</span>
<span class="t" style="top:475.5px;line-height:16px;font-size:11px;color:#000;right:161px;">20004</span>
<div style="left:1243px;top:134px;width:15px;height:367px;background:#f0f0f0;"></div>
<div style="left:1243px;top:151px;width:15px;height:138px;background:#cdcdcd;"></div>
<svg style="left:1246.5px;top:140px" width="8" height="5" viewBox="0 0 8 5"><path d="M0.7 4.3L4 1l3.3 3.3" fill="none" stroke="#505050" stroke-width="1.9"/></svg>
<svg style="left:1246.5px;top:490.5px" width="8" height="5" viewBox="0 0 8 5"><path d="M0.7 0.7L4 4l3.3-3.3" fill="none" stroke="#505050" stroke-width="1.9"/></svg>
<div style="left:185px;top:505px;width:1075px;height:304px;background:#fff;border:5px solid #6b6b6b;"></div>
<span class="t hd" style="top:517.5px;line-height:16px;font-size:12px;color:#000;letter-spacing:-0.079px;font-weight:bold;left:204.75px;">Ecritures de la facture sélectionnée: [Fact.-Nº = '20042']</span>
<div style="left:1173px;top:513px;width:73px;height:21px;background:#e1e1e1;border:1px solid #adadad;"></div>
<span class="t" style="top:516.0px;line-height:16px;font-size:11px;color:#000;left:1009px;width:400px;text-align:center;">Ouvrir</span>
<div style="left:198px;top:538px;width:1050px;height:1px;background:#a0a0a0;"></div>
<div style="left:198px;top:542px;width:1049px;height:258px;background:#fff;border:1px solid #000;"></div>
<div style="left:199px;top:543px;width:1030px;height:17px;background:#d4d4d4;"></div>
<div style="left:199px;top:560px;width:1030px;height:1px;background:#000;"></div>
<div style="left:199px;top:577px;width:1030px;height:1px;background:repeating-linear-gradient(90deg,#cbcbcf 0 1px,rgba(255,255,255,0) 1px 2px);"></div>
<div style="left:199px;top:594px;width:1030px;height:1px;background:repeating-linear-gradient(90deg,#cbcbcf 0 1px,rgba(255,255,255,0) 1px 2px);"></div>
<div style="left:199px;top:611px;width:1030px;height:1px;background:repeating-linear-gradient(90deg,#cbcbcf 0 1px,rgba(255,255,255,0) 1px 2px);"></div>
<div style="left:199px;top:628px;width:1030px;height:1px;background:repeating-linear-gradient(90deg,#cbcbcf 0 1px,rgba(255,255,255,0) 1px 2px);"></div>
<div style="left:199px;top:645px;width:1030px;height:1px;background:repeating-linear-gradient(90deg,#cbcbcf 0 1px,rgba(255,255,255,0) 1px 2px);"></div>
<div style="left:199px;top:662px;width:1030px;height:1px;background:repeating-linear-gradient(90deg,#cbcbcf 0 1px,rgba(255,255,255,0) 1px 2px);"></div>
<div style="left:199px;top:679px;width:1030px;height:1px;background:repeating-linear-gradient(90deg,#cbcbcf 0 1px,rgba(255,255,255,0) 1px 2px);"></div>
<div style="left:199px;top:696px;width:1030px;height:1px;background:repeating-linear-gradient(90deg,#cbcbcf 0 1px,rgba(255,255,255,0) 1px 2px);"></div>
<div style="left:199px;top:713px;width:1030px;height:1px;background:repeating-linear-gradient(90deg,#cbcbcf 0 1px,rgba(255,255,255,0) 1px 2px);"></div>
<div style="left:199px;top:730px;width:1030px;height:1px;background:repeating-linear-gradient(90deg,#cbcbcf 0 1px,rgba(255,255,255,0) 1px 2px);"></div>
<div style="left:199px;top:747px;width:1030px;height:1px;background:repeating-linear-gradient(90deg,#cbcbcf 0 1px,rgba(255,255,255,0) 1px 2px);"></div>
<div style="left:199px;top:764px;width:1030px;height:1px;background:repeating-linear-gradient(90deg,#cbcbcf 0 1px,rgba(255,255,255,0) 1px 2px);"></div>
<div style="left:199px;top:781px;width:1030px;height:1px;background:repeating-linear-gradient(90deg,#cbcbcf 0 1px,rgba(255,255,255,0) 1px 2px);"></div>
<div style="left:249px;top:561px;width:1px;height:238px;background:repeating-linear-gradient(180deg,#cbcbcf 0 1px,rgba(255,255,255,0) 1px 2px);"></div>
<div style="left:249px;top:546px;width:1px;height:12px;background:#6e6e6e;"></div>
<div style="left:250px;top:546px;width:1px;height:12px;background:#fff;"></div>
<div style="left:319px;top:561px;width:1px;height:238px;background:repeating-linear-gradient(180deg,#cbcbcf 0 1px,rgba(255,255,255,0) 1px 2px);"></div>
<div style="left:319px;top:546px;width:1px;height:12px;background:#6e6e6e;"></div>
<div style="left:320px;top:546px;width:1px;height:12px;background:#fff;"></div>
<div style="left:369px;top:561px;width:1px;height:238px;background:repeating-linear-gradient(180deg,#cbcbcf 0 1px,rgba(255,255,255,0) 1px 2px);"></div>
<div style="left:369px;top:546px;width:1px;height:12px;background:#6e6e6e;"></div>
<div style="left:370px;top:546px;width:1px;height:12px;background:#fff;"></div>
<div style="left:419px;top:561px;width:1px;height:238px;background:repeating-linear-gradient(180deg,#cbcbcf 0 1px,rgba(255,255,255,0) 1px 2px);"></div>
<div style="left:419px;top:546px;width:1px;height:12px;background:#6e6e6e;"></div>
<div style="left:420px;top:546px;width:1px;height:12px;background:#fff;"></div>
<div style="left:613px;top:561px;width:1px;height:238px;background:repeating-linear-gradient(180deg,#cbcbcf 0 1px,rgba(255,255,255,0) 1px 2px);"></div>
<div style="left:613px;top:546px;width:1px;height:12px;background:#6e6e6e;"></div>
<div style="left:614px;top:546px;width:1px;height:12px;background:#fff;"></div>
<div style="left:698px;top:561px;width:1px;height:238px;background:repeating-linear-gradient(180deg,#cbcbcf 0 1px,rgba(255,255,255,0) 1px 2px);"></div>
<div style="left:698px;top:546px;width:1px;height:12px;background:#6e6e6e;"></div>
<div style="left:699px;top:546px;width:1px;height:12px;background:#fff;"></div>
<div style="left:783px;top:561px;width:1px;height:238px;background:repeating-linear-gradient(180deg,#cbcbcf 0 1px,rgba(255,255,255,0) 1px 2px);"></div>
<div style="left:783px;top:546px;width:1px;height:12px;background:#6e6e6e;"></div>
<div style="left:784px;top:546px;width:1px;height:12px;background:#fff;"></div>
<div style="left:843px;top:561px;width:1px;height:238px;background:repeating-linear-gradient(180deg,#cbcbcf 0 1px,rgba(255,255,255,0) 1px 2px);"></div>
<div style="left:843px;top:546px;width:1px;height:12px;background:#6e6e6e;"></div>
<div style="left:844px;top:546px;width:1px;height:12px;background:#fff;"></div>
<div style="left:903px;top:561px;width:1px;height:238px;background:repeating-linear-gradient(180deg,#cbcbcf 0 1px,rgba(255,255,255,0) 1px 2px);"></div>
<div style="left:903px;top:546px;width:1px;height:12px;background:#6e6e6e;"></div>
<div style="left:904px;top:546px;width:1px;height:12px;background:#fff;"></div>
<div style="left:963px;top:561px;width:1px;height:238px;background:repeating-linear-gradient(180deg,#cbcbcf 0 1px,rgba(255,255,255,0) 1px 2px);"></div>
<div style="left:963px;top:546px;width:1px;height:12px;background:#6e6e6e;"></div>
<div style="left:964px;top:546px;width:1px;height:12px;background:#fff;"></div>
<span class="t" style="top:545.0px;line-height:16px;font-size:11px;color:#000;left:847.8px;">Code TVA</span>
<span class="t" style="top:546.0px;line-height:16px;font-size:11px;color:#000;left:203.6px;">Pièce</span>
<span class="t" style="top:546.0px;line-height:16px;font-size:11px;color:#000;left:85px;width:400px;text-align:center;">Date</span>
<span class="t" style="top:545.0px;line-height:16px;font-size:11px;color:#000;left:145px;width:400px;text-align:center;">Contre<i class="e">...</i></span>
<span class="t" style="top:546.0px;line-height:16px;font-size:11px;color:#000;left:195px;width:400px;text-align:center;">Compte</span>
<span class="t" style="top:546.0px;line-height:16px;font-size:11px;color:#000;left:423.6px;">Libellé</span>
<span class="t" style="top:546.0px;line-height:16px;font-size:11px;color:#000;right:569px;">Débit</span>
<span class="t" style="top:546.0px;line-height:16px;font-size:11px;color:#000;right:484px;">Crédit</span>
<span class="t" style="top:546.0px;line-height:16px;font-size:11px;color:#000;right:424.4px;">Impôt</span>
<span class="t" style="top:545.0px;line-height:16px;font-size:11px;color:#000;left:907px;">CDA / Pr<i class="e">...</i></span>
<svg style="left:237px;top:549px" width="7" height="6" viewBox="0 0 7 6"><path d="M0 0.5h6.5M0.6 0.5L3.3 5.6" fill="none" stroke="#222" stroke-width="1.1"/><path d="M6.2 1L3.6 5.6" stroke="#fff" stroke-width="1"/></svg>
<span class="t" style="top:561.5px;line-height:16px;font-size:11px;color:#000;right:1018px;">20032</span>
<span class="t" style="top:561.5px;line-height:16px;font-size:11px;color:#000;left:84.5px;width:400px;text-align:center;">20.12.2017</span>
<span class="t" style="top:561.5px;line-height:16px;font-size:11px;color:#000;left:144.5px;width:400px;text-align:center;">6000</span>
<span class="t" style="top:561.5px;line-height:16px;font-size:11px;color:#000;left:194.5px;width:400px;text-align:center;">2000</span>
<span class="t" style="top:561.5px;line-height:16px;font-size:11px;color:#000;left:423.6px;">Facture IM-8598, Gerimmo</span>
<span class="t" style="top:561.5px;line-height:16px;font-size:11px;color:#1414b8;right:484px;">2'500.00</span>
<span class="t" style="top:578.5px;line-height:16px;font-size:11px;color:#000;left:144.5px;width:400px;text-align:center;">2000</span>
<span class="t" style="top:578.5px;line-height:16px;font-size:11px;color:#000;left:194.5px;width:400px;text-align:center;">6000</span>
<span class="t" style="top:578.5px;line-height:16px;font-size:11px;color:#000;left:423.6px;">Facture, GERIMMO</span>
<span class="t" style="top:578.5px;line-height:16px;font-size:11px;color:#1414b8;right:569px;">2'500.00</span>
<div style="left:1230px;top:543px;width:15px;height:256px;background:#f0f0f0;"></div>
<svg style="left:1233.5px;top:549.5px" width="8" height="5" viewBox="0 0 8 5"><path d="M0.7 4.3L4 1l3.3 3.3" fill="none" stroke="#bdbdbd" stroke-width="1.9"/></svg>
<svg style="left:1233.5px;top:789px" width="8" height="5" viewBox="0 0 8 5"><path d="M0.7 0.7L4 4l3.3-3.3" fill="none" stroke="#bdbdbd" stroke-width="1.9"/></svg>
<div style="left:182px;top:811px;width:1081px;height:1px;background:#142d6e;"></div>
<div style="left:1px;top:812px;width:1262px;height:23px;background:linear-gradient(180deg,#d9e7fb 0%,#c5d9f6 30%,#a7c4ef 65%,#86aee6 96%,#74b0f0 100%);border-top:1px solid #fbfdff;"></div>
<span class="t" style="top:816.0px;line-height:16px;font-size:12px;color:#000;letter-spacing:-0.336px;left:15.2px;">Serveur : INT-NB021</span>
<span class="t" style="top:816.0px;line-height:16px;font-size:12px;color:#000;letter-spacing:-0.173px;left:154.3px;">Utilisateur : TopUser</span>
<span class="t" style="top:816.0px;line-height:16px;font-size:12px;color:#000;letter-spacing:-0.211px;left:364.6px;">N° de lignes : 46</span>
<span class="t" style="top:816.0px;line-height:16px;font-size:12px;color:#1414c8;letter-spacing:-0.357px;right:20px;">Version 9.2, Build 9.2.2.10 (x64)</span>
<div style="left:139px;top:816px;width:1px;height:15px;background:#f4f8ff;"></div>
<div style="left:138px;top:816px;width:1px;height:15px;background:#8fb0e4;"></div>
<div style="left:276px;top:816px;width:1px;height:15px;background:#f4f8ff;"></div>
<div style="left:275px;top:816px;width:1px;height:15px;background:#8fb0e4;"></div>
<div style="left:350px;top:816px;width:1px;height:15px;background:#f4f8ff;"></div>
<div style="left:349px;top:816px;width:1px;height:15px;background:#8fb0e4;"></div>
<div style="left:467px;top:816px;width:1px;height:15px;background:#f4f8ff;"></div>
<div style="left:466px;top:816px;width:1px;height:15px;background:#8fb0e4;"></div>
<div style="left:283px;top:817px;width:59px;height:12px;background:#e6e6e6;border:1px solid #bcbcbc;"></div>
<svg style="left:1249px;top:821.5px" width="13" height="13" shape-rendering="crispEdges"><rect x="9" y="1" width="2" height="2" fill="#e9f0fc"/><rect x="8" y="0" width="2" height="2" fill="#6a90d0" opacity=".0"/><rect x="9" y="5" width="2" height="2" fill="#e9f0fc"/><rect x="8" y="4" width="2" height="2" fill="#6a90d0" opacity=".0"/><rect x="9" y="9" width="2" height="2" fill="#e9f0fc"/><rect x="8" y="8" width="2" height="2" fill="#6a90d0" opacity=".0"/><rect x="5" y="5" width="2" height="2" fill="#e9f0fc"/><rect x="4" y="4" width="2" height="2" fill="#6a90d0" opacity=".0"/><rect x="5" y="9" width="2" height="2" fill="#e9f0fc"/><rect x="4" y="8" width="2" height="2" fill="#6a90d0" opacity=".0"/><rect x="1" y="9" width="2" height="2" fill="#e9f0fc"/><rect x="0" y="8" width="2" height="2" fill="#6a90d0" opacity=".0"/></svg>
</div>
</body></html>
